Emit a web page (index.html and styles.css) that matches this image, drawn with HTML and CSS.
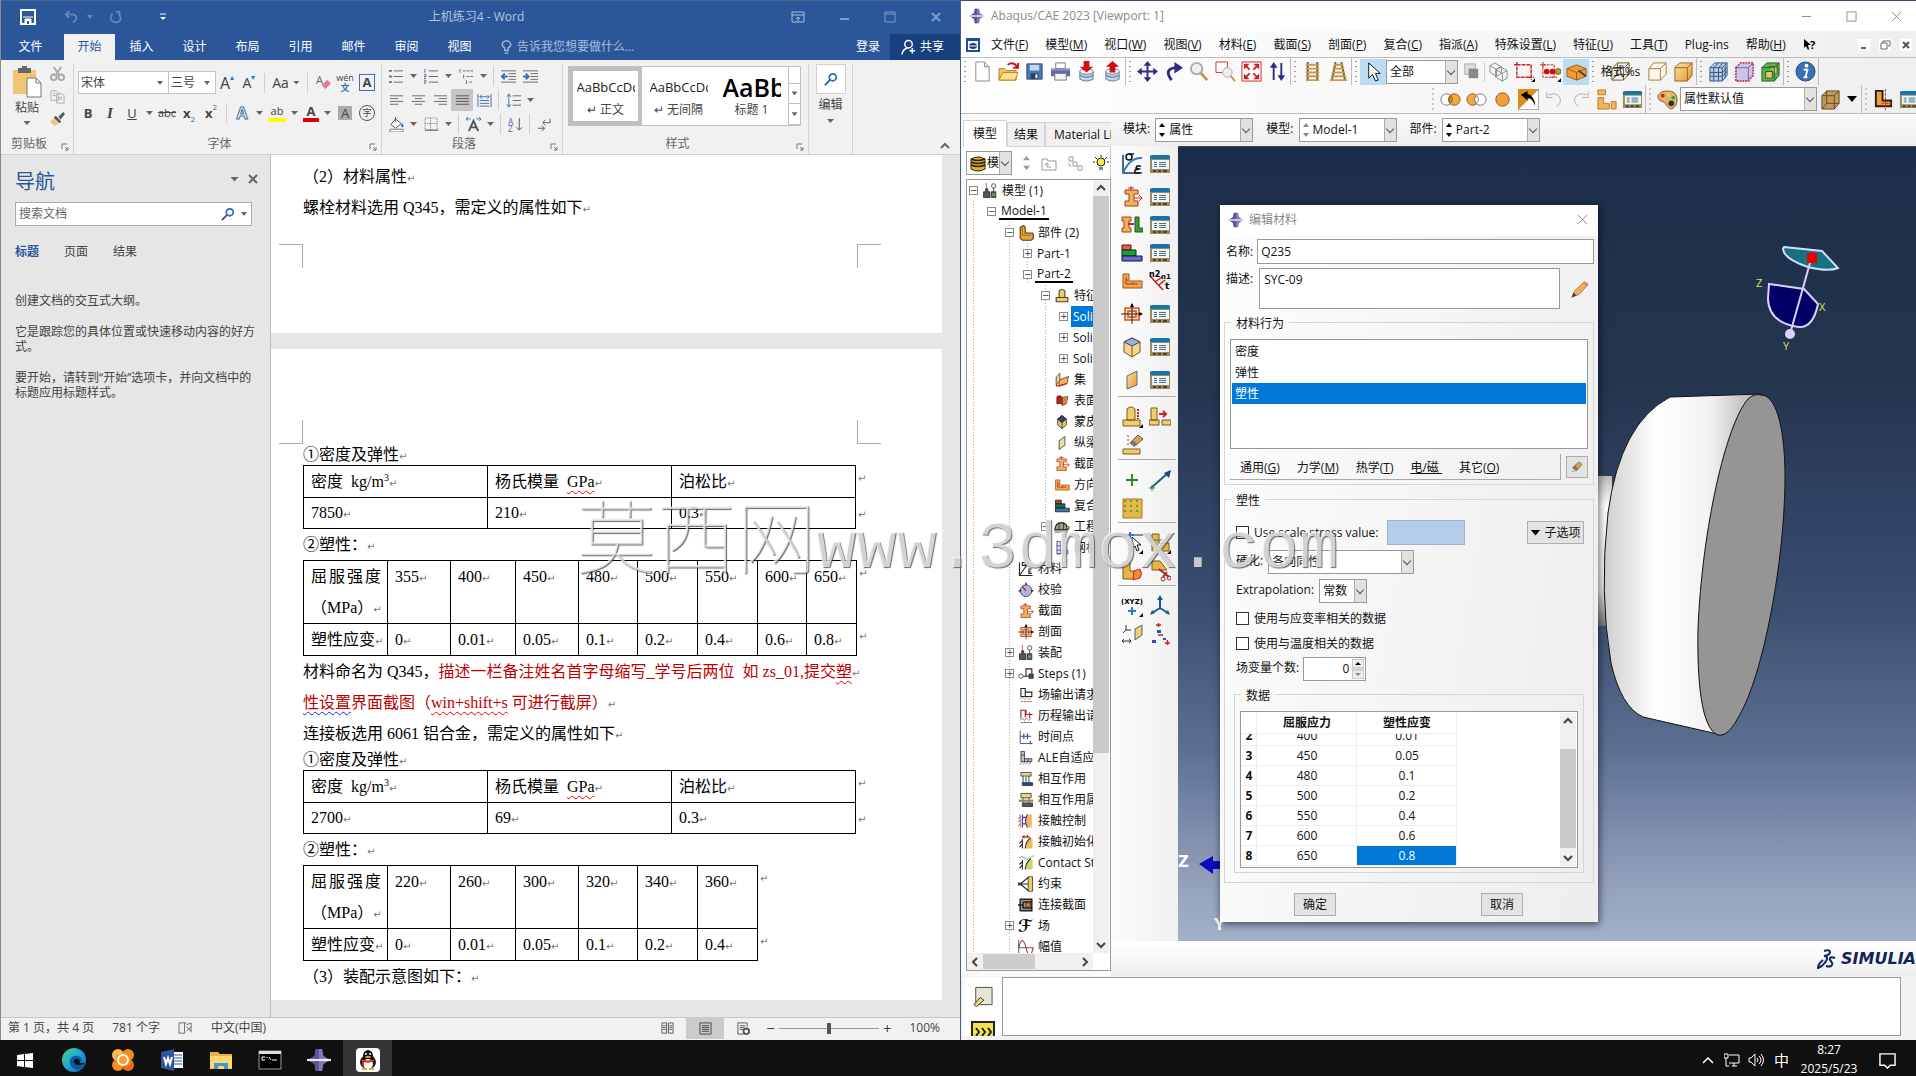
FILE: index.html
```html
<!DOCTYPE html>
<html lang="zh-CN">
<head>
<meta charset="utf-8">
<title>上机练习4 - Word</title>
<link rel="stylesheet" href="styles.css">
</head>
<body>
<svg class="defs" aria-hidden="true">
  <defs>
    <linearGradient id="gold" x1="0" y1="0" x2="1" y2="1"><stop offset="0" stop-color="#ffe3a0"/><stop offset="1" stop-color="#e09a30"/></linearGradient>
    <linearGradient id="steel" x1="0" y1="0" x2="1" y2="0"><stop offset="0" stop-color="#cfcfcf"/><stop offset=".3" stop-color="#fff"/><stop offset=".6" stop-color="#f2f2f2"/><stop offset="1" stop-color="#8a8a8a"/></linearGradient>
    <linearGradient id="edge" x1="0" y1="0" x2="1" y2="1"><stop offset="0" stop-color="#45d67a"/><stop offset=".5" stop-color="#1fa5dc"/><stop offset="1" stop-color="#0c59a4"/></linearGradient>
  </defs>
  <symbol id="abq" viewBox="0 0 22 22"><path d="M8 1h6l1 6 6 4-6 4-1 6H8l-1-6-6-4 6-4z" fill="#7d7ab5"/><path d="M8 1h3v20H8l-1-6-6-4 6-4z" fill="#5b5794"/><path d="M0 11h22" stroke="#e8e8ff" stroke-width="2"/></symbol>
  <symbol id="tbl" viewBox="0 0 22 22"><path d="M1 4q0-2 3-2h15q2 0 2 2v16H1z" fill="#9a8a5c"/><path d="M1 6V4q0-2 3-2h15q2 0 2 2v2z" fill="#1673ae"/><path d="M3 7h17v9H3z" fill="#f2f4ef"/><path d="M5 9.5h3M10 9.5h7M5 11.5h3M10 11.5h7M5 13.5h3M10 13.5h7" stroke="#46749a"/><path d="M4 17h3v2H4zM9 17h3v2H9zM14 17h4v2h-4z" fill="#4d4630"/></symbol>
  <symbol id="new" viewBox="0 0 22 22"><path d="M4 1h9l5 5v15H4z" fill="#fff" stroke="#888"/><path d="M13 1v5h5" fill="#ddd" stroke="#888"/></symbol>
  <symbol id="open" viewBox="0 0 22 22"><path d="M1 20V8h6l2 2h10v10z" fill="#f5c35c" stroke="#b58325"/><path d="M1 20l4-8h16l-3 8z" fill="#ffe08e" stroke="#b58325"/><path d="M10 4q6-4 10 2M21 2v5h-5" fill="none" stroke="#d0141c" stroke-width="2"/></symbol>
  <symbol id="save" viewBox="0 0 22 22"><path d="M3 3h16v16H3z" fill="#4a78b5" stroke="#2d4d7e"/><path d="M6 4h10v6H6z" fill="#c6d8ee"/><path d="M7 13h8v6H7z" fill="#2b3f60"/><path d="M12 14h2v4h-2z" fill="#fff"/></symbol>
  <symbol id="print" viewBox="0 0 22 22"><path d="M6 2h10v6H6z" fill="#fff" stroke="#777"/><path d="M1 8h20v8H1z" fill="#6567b5"/><path d="M1 8h20v2H1z" fill="#8f91d2"/><path d="M5 13h12v7H5z" fill="#f5f5f5" stroke="#777"/></symbol>
  <symbol id="dbd" viewBox="0 0 22 22"><path d="M4 11v8q7 4 14 0v-8z" fill="#c5d3e4" stroke="#6c7f98"/><ellipse cx="11" cy="11" rx="7" ry="3" fill="#eef3f8" stroke="#6c7f98"/><path d="M4 15q7 4 14 0" fill="none" stroke="#3c6fa5"/><path d="M8 0h6v6h4l-7 6-7-6h4z" fill="#d40d12"/></symbol>
  <symbol id="dbu" viewBox="0 0 22 22"><path d="M4 11v8q7 4 14 0v-8z" fill="#c5d3e4" stroke="#6c7f98"/><ellipse cx="11" cy="11" rx="7" ry="3" fill="#eef3f8" stroke="#6c7f98"/><path d="M4 15q7 4 14 0" fill="none" stroke="#3c6fa5"/><path d="M8 12h6V6h4l-7-6-7 6h4z" fill="#d40d12"/></symbol>
  <symbol id="move" viewBox="0 0 22 22"><path d="M11 3v16M3 11h16" stroke="#2c2c86" stroke-width="2"/><path d="M11 0l4 5H7zM11 22l4-5H7zM0 11l5-4v8zM22 11l-5-4v8z" fill="#2c2c86"/></symbol>
  <symbol id="rot" viewBox="0 0 22 22"><path d="M9 20Q0 8 14 7" fill="none" stroke="#2c2c86" stroke-width="3"/><path d="M12 1l9 6-9 6z" fill="#2c2c86"/></symbol>
  <symbol id="zoom" viewBox="0 0 22 22"><path d="M12 12l7 8" stroke="#c79644" stroke-width="3"/><circle cx="8" cy="8" r="6" fill="#eee" stroke="#aaa" stroke-width="2"/></symbol>
  <symbol id="zbox" viewBox="0 0 22 22"><path d="M1 1h12v11H1z" fill="none" stroke="#c33"/><path d="M16 15l5 6" stroke="#c79644" stroke-width="2"/><circle cx="13" cy="12" r="5" fill="#eee" stroke="#aaa"/></symbol>
  <symbol id="fit" viewBox="0 0 22 22"><path d="M1 1h20v20H1z" fill="#fff" stroke="#c22"/><path d="M3 3h6L3 9zM19 3h-6l6 6zM3 19h6l-6-6zM19 19h-6l6-6z" fill="#c22"/><path d="M4 4l5 5M18 4l-5 5M4 18l5-5M18 18l-5-5" stroke="#c22" stroke-width="2"/></symbol>
  <symbol id="ud" viewBox="0 0 22 22"><path d="M7 5v15M15 2v15" stroke="#2c2c86" stroke-width="2"/><path d="M7 1l4 6H3zM15 21l4-6h-8z" fill="#2c2c86"/></symbol>
  <symbol id="lad" viewBox="0 0 22 22"><path d="M6 1v20M16 1v20" stroke="#6b5a30" stroke-width="2"/><path d="M4 4h14M4 8h14M4 12h14M4 16h14M4 20h14" stroke="#c59a4a" stroke-width="2"/></symbol>
  <symbol id="lad2" viewBox="0 0 22 22"><path d="M8 1L4 21M14 1l4 20" stroke="#6b5a30" stroke-width="2"/><path d="M6 4h10M5 8h12M4 12h14M3 16h16M2 20h18" stroke="#c59a4a" stroke-width="2"/></symbol>
  <symbol id="cur" viewBox="0 0 22 22"><path d="M6 2v16l4-4 3 7 3-1-3-7h5z" fill="#fff" stroke="#111"/></symbol>
  <symbol id="pick" viewBox="0 0 22 22"><path d="M0 3h22" stroke="#222"/><path d="M9 0v7M5 3h8" stroke="#2779d8" stroke-width="2"/><path d="M11 5v12l3-3 2 5 2-1-2-5h4z" fill="#fff" stroke="#111"/><path d="M22 22h-4l4-4z"/></symbol>
  <symbol id="sqs" viewBox="0 0 22 22"><path d="M4 3h11v11H4z" fill="#ddd" stroke="#aaa"/><path d="M8 8h10v10H8z" fill="#888"/></symbol>
  <symbol id="cubes" viewBox="0 0 22 22"><path d="M2 5l5-3 7 4v7l-5 3-7-4zM2 5l7 4v7M9 9l5-3M8 9l5-3 7 4v8l-5 3-7-4zM8 9l7 4v8M15 13l5-3" fill="none" stroke="#888"/></symbol>
  <symbol id="rect" viewBox="0 0 22 22"><path d="M3 4h15v13H3zM0 4h6M3 1v6M15 17h6M18 14v6" fill="none" stroke="#c22" stroke-width="1.5" stroke-dasharray="4 1"/><path d="M22 22h-4l4-4z"/></symbol>
  <symbol id="dots" viewBox="0 0 22 22"><path d="M3 4h12v13H3zM0 4h6M3 1v6M12 17h6" fill="none" stroke="#c22" stroke-dasharray="3 1"/><circle cx="7" cy="11" r="3" fill="#c11"/><circle cx="13" cy="11" r="3" fill="#c11"/><circle cx="19" cy="11" r="3" fill="#d9912e" stroke="#74501a"/><path d="M22 22h-4l4-4z"/></symbol>
  <symbol id="obox" viewBox="0 0 22 22"><path d="M1 8l10-4 10 4v8l-10 4-10-4z" fill="#f29b33" stroke="#9a5a12"/><path d="M1 8l10 4 10-4M11 12v8" fill="none" stroke="#9a5a12"/><path d="M13 10l8 6" stroke="#445" stroke-width="2"/></symbol>
  <symbol id="wire" viewBox="0 0 22 22"><path d="M2 8h12v12H2zM8 2h12v12H8zM2 8l6-6M14 8l6-6M2 20l6-6M14 20l6-6" fill="none" stroke="#6a5620"/></symbol>
  <symbol id="hid" viewBox="0 0 22 22"><path d="M2 8l5-6h13v12l-6 6H2zM2 8h12v12M14 8l6-6" fill="#fdf8ec" stroke="#a08030"/></symbol>
  <symbol id="sol" viewBox="0 0 22 22"><path d="M2 7l5-5h13v13l-5 6H2z" fill="url(#gold)" stroke="#94651c"/><path d="M2 7h13v14M15 7l5-5" fill="none" stroke="#94651c"/></symbol>
  <symbol id="mesh" viewBox="0 0 22 22"><path d="M2 7l5-5h13v13l-5 6H2z" fill="#b8cde8" stroke="#35507f"/><path d="M2 7h13v14M15 7l5-5M2 12h13l5-5M2 16h13l5-5M6 7v14M11 7v14M6 7l5-5M11 7l5-5M18 5v13" fill="none" stroke="#35507f"/></symbol>
  <symbol id="pmesh" viewBox="0 0 22 22"><path d="M2 7l5-5h13v13l-5 6H2z" fill="#ccc4e8" stroke="#b8427a" stroke-dasharray="2 1" stroke-width="2"/><path d="M2 7h13v14M15 7l5-5" fill="none" stroke="#6f5fa5"/></symbol>
  <symbol id="gcube" viewBox="0 0 22 22"><path d="M2 7l5-5h13v13l-5 6H2z" fill="#5faf4c" stroke="#1f5f22"/><path d="M6 11h7v7H6zM9 6h9v8" fill="#e5c170" stroke="#1f5f22"/><path d="M2 7h13v14M15 7l5-5" fill="none" stroke="#1f5f22"/></symbol>
  <symbol id="info" viewBox="0 0 22 22"><circle cx="11" cy="11" r="10" fill="#3a6fb5" stroke="#234b80"/><circle cx="12" cy="5" r="2" fill="#fff"/><path d="M9 9h4l-2 8h2M9 17h4" fill="none" stroke="#fff" stroke-width="2"/></symbol>
  <symbol id="v1" viewBox="0 0 22 22"><circle cx="7" cy="11" r="6" fill="#fff" stroke="#777"/><circle cx="15" cy="11" r="6" fill="#f2a844" stroke="#8a5a1c"/><path d="M11 7q-4 4 0 8 4-4 0-8" fill="#d8861c" stroke="#8a5a1c"/></symbol>
  <symbol id="v2" viewBox="0 0 22 22"><circle cx="7" cy="11" r="6" fill="#f2a844" stroke="#8a5a1c"/><circle cx="15" cy="11" r="6" fill="#fff" stroke="#777"/><path d="M11 7q-4 4 0 8 4-4 0-8" fill="#fff" stroke="#777"/></symbol>
  <symbol id="v3" viewBox="0 0 22 22"><circle cx="11" cy="11" r="7" fill="#f2a13a" stroke="#8a5a1c"/></symbol>
  <symbol id="bent" viewBox="0 0 22 22"><path d="M0 0h22v22H0z" fill="#fff" stroke="#555"/><path d="M0 0h22L0 22z" fill="#e08a1c"/><path d="M3 6l7-4v3q8 3 8 13-3-8-8-9v3z"/></symbol>
  <symbol id="undo" viewBox="0 0 22 22"><path d="M5 6q9-3 12 4 1 6-4 8" fill="none" stroke="#aaa"/><path d="M3 3v6h6" fill="none" stroke="#aaa"/></symbol>
  <symbol id="redo" viewBox="0 0 22 22"><path d="M17 6Q8 3 5 10q-1 6 4 8" fill="none" stroke="#aaa"/><path d="M19 3v6h-6" fill="none" stroke="#aaa"/></symbol>
  <symbol id="blk" viewBox="0 0 22 22"><path d="M2 1h8v5H2zM2 9h6v6h6v6H2zM16 13h5v8h-5z" fill="#f0b458" stroke="#b9802c"/></symbol>
  <symbol id="pal" viewBox="0 0 22 22"><path d="M11 2q10 0 10 9 0 9-7 10-4-3-6-7Q0 12 1 7q3-5 10-5z" fill="#e4b26a" stroke="#845a20"/><circle cx="6" cy="7" r="2" fill="#c22"/><circle cx="12" cy="6" r="2" fill="#e8d23a"/><circle cx="17" cy="9" r="2" fill="#2a5"/><circle cx="15" cy="15" r="3" fill="#333"/></symbol>
  <symbol id="tan" viewBox="0 0 22 22"><path d="M2 7l5-5h13v13l-5 6H2z" fill="#c39a5c" stroke="#5f4720"/><path d="M2 7h13v14M15 7l5-5M7 2v13h13M7 15l-5 6" fill="none" stroke="#5f4720"/></symbol>
  <symbol id="lred" viewBox="0 0 22 22"><path d="M3 2h7v10h9v6H3z" fill="#f0a030" stroke="#222" stroke-width="2"/><path d="M13 0v22M9 15h12" stroke="#c22" stroke-dasharray="3 1"/></symbol>
  <symbol id="se" viewBox="0 0 22 22"><path d="M2 2v18h19" fill="none" stroke="#235" stroke-width="1.5"/><path d="M2 20Q9 4 21 5" fill="none" stroke="#2b7cc0" stroke-width="2"/><circle cx="8" cy="4" r="3" fill="none" stroke="#111" stroke-width="1.5"/><path d="M8 1h5M20 13h-4l-1 2 3 1-4 1v3h5" fill="none" stroke="#111" stroke-width="1.5"/></symbol>
  <symbol id="ibeam" viewBox="0 0 22 22"><path d="M4 4h13v4h-4v7h4v5H4v-5h4V8H4z" fill="#f0b060" stroke="#a33d16"/><path d="M10 0v4M7 2h6M13 12h8M18 9l3 3-3 3" fill="none" stroke="#c22"/></symbol>
  <symbol id="il" viewBox="0 0 22 22"><path d="M1 3h9v4H8v7h2v4H1v-4h2V7H1z" fill="#f0b060" stroke="#a33d16"/><path d="M7 10h6" stroke="#c22" stroke-width="2"/><path d="M14 3h4v11h4v4h-8z" fill="#3d9a3c" stroke="#1c5a20"/></symbol>
  <symbol id="stack" viewBox="0 0 22 22"><path d="M1 3h9v5H1z" fill="#e8604c" stroke="#511"/><path d="M1 8h14v6H1z" fill="#18a42c" stroke="#031"/><path d="M1 14h20v5H1z" fill="#6a68c8" stroke="#114"/></symbol>
  <symbol id="stack2" viewBox="0 0 22 22"><path d="M2 3h8v5H2z" fill="#b5482c" stroke="#111"/><path d="M2 8h13v6H2z" fill="#23685a" stroke="#111"/><path d="M2 14h19v5H2z" fill="#3a7aa0" stroke="#111"/></symbol>
  <symbol id="ell" viewBox="0 0 22 22"><path d="M2 4h6v7h13v7H2z" fill="#f0a850" stroke="#9a5515"/><path d="M5 7v7h12M5 10h2M12 12v2" fill="none" stroke="#c22"/></symbol>
  <symbol id="nt" viewBox="0 0 22 22"><path d="M1 6l13 14M6 12l7-5M10 15l6-5" stroke="#b22" stroke-width="1.5"/><text x="0" y="7" font-size="8" font-weight="bold" font-family="DejaVu Sans">n2</text><text x="12" y="9" font-size="7" font-weight="bold" font-family="DejaVu Sans">n1</text><text x="16" y="19" font-size="9" font-weight="bold" font-family="DejaVu Sans">t</text></symbol>
  <symbol id="cross" viewBox="0 0 22 22"><path d="M4 5h14v12H4zM7 8h8v6H7z" fill="#fbe0c0" stroke="#d2551c" stroke-width="1.5"/><path d="M11 1v20M0 11h21" stroke="#222"/><path d="M11 0l2 4H9zM22 11l-4-2v4z"/></symbol>
  <symbol id="cube3" viewBox="0 0 22 22"><path d="M3 6l8-4 8 4v10l-8 5-8-5z" fill="#f6d694" stroke="#7a5520"/><path d="M3 6l8-4 8 4-8 4z" fill="#9ab2de" stroke="#445"/><path d="M11 10v11" stroke="#7a5520"/></symbol>
  <symbol id="plate" viewBox="0 0 22 22"><path d="M6 7l10-5v14L6 20z" fill="url(#gold)" stroke="#5a6a80"/></symbol>
  <symbol id="ext" viewBox="0 0 22 22"><path d="M2 14h17v6H2zM6 3q4-4 8 0v11H6z" fill="#f0cc70" stroke="#7a5a1c"/><path d="M17 3v10" stroke="#c22" stroke-dasharray="2 1" stroke-width="2"/><path d="M22 22h-4l4-4z"/></symbol>
  <symbol id="ext2" viewBox="0 0 22 22"><path d="M2 2h6v12H2zM0 14h10v5H0zM13 14h9v5h-9z" fill="#f0cc70" stroke="#7a5a1c"/><path d="M10 8h6M14 5l3 3-3 3" fill="none" stroke="#c22" stroke-width="2"/></symbol>
  <symbol id="ers" viewBox="0 0 22 22"><path d="M2 15h17v5H2z" fill="#f0cc70" stroke="#7a5a1c"/><path d="M7 1v12" stroke="#c22" stroke-dasharray="2 2"/><path d="M9 9l8-8 5 4-8 7z" fill="#e0a050" stroke="#555"/><path d="M9 9l3-3 4 4-3 3z" fill="#777"/></symbol>
  <symbol id="plus" viewBox="0 0 22 22"><path d="M11 5v12M5 11h12" stroke="#2a8a30" stroke-width="2"/></symbol>
  <symbol id="axis" viewBox="0 0 22 22"><path d="M2 19L20 3" stroke="#126a7a" stroke-width="2"/><path d="M22 1l-2 8-5-5z" fill="#124a8a"/><path d="M3 16v6M0 19h6" stroke="#2a8a30"/></symbol>
  <symbol id="grid" viewBox="0 0 22 22"><path d="M2 2h19v19H2z" fill="#e6b84c" stroke="#a87a20"/><path d="M3 4h17M3 9h17M3 14h17" stroke="#5f9f2c" stroke-width="2" stroke-dasharray="2 4"/></symbol>
  <symbol id="part" viewBox="0 0 22 22"><path d="M3 2h7v9h10v8H3z" fill="#e9b548" stroke="#7a5a1c"/><path d="M0 8h14" stroke="#2779b8"/><path d="M22 22h-4l4-4z"/></symbol>
  <symbol id="part2" viewBox="0 0 22 22"><path d="M2 2h7v9h4v8H2z" fill="#e9b548" stroke="#7a5a1c"/><path d="M13 11l6-2q3 4 0 9l-7 2z" fill="#f08a40" stroke="#c22"/></symbol>
  <symbol id="cut" viewBox="0 0 22 22"><path d="M3 1h8l7 9H3z" fill="#e9b548" stroke="#7a5a1c"/><path d="M10 9l10 8M14 17l4-5" stroke="#9a2a2a" stroke-width="2"/><circle cx="20" cy="18" r="2" fill="none" stroke="#9a2a2a"/><circle cx="14" cy="19" r="2" fill="none" stroke="#9a2a2a"/></symbol>
  <symbol id="xyz" viewBox="0 0 22 22"><text x="0" y="9" font-size="7" font-weight="bold" font-family="DejaVu Sans">(XYZ)</text><path d="M11 12v8M7 16h8" stroke="#2779d8" stroke-width="2"/><path d="M22 22h-4l4-4z"/></symbol>
  <symbol id="tri" viewBox="0 0 22 22"><path d="M11 2v11L3 18M11 13l8 5" fill="none" stroke="#155a9a" stroke-width="2"/><path d="M11 0l3 5H8zM1 20l2-5 3 3zM21 20l-2-5-3 3z" fill="#155a9a"/></symbol>
  <symbol id="trip" viewBox="0 0 22 22"><path d="M5 2v5h5M5 7L2 10M1 18h9M3 16l-2 2 2 2M8 16l2 2-2 2" fill="none" stroke="#333"/><path d="M14 6l7-4v10l-7 5z" fill="#f1cf78" stroke="#467"/></symbol>
  <symbol id="pts" viewBox="0 0 22 22"><path d="M7 2h5M9.500 0v4M16 20h5M18.500 17v5M9 12h5" stroke="#c22" stroke-width="1.500"/><path d="M8 7h4v3H8zM3 17h4v3H3zM14 15h3v2h-3z" fill="#25b"/></symbol>
  <symbol id="asm" viewBox="0 0 22 22"><path d="M2 20V12h3V8h3v4h3v8zM13 20v-8h6v8z" fill="#555" stroke="#222"/><path d="M6 0v8" stroke="#c22"/><circle cx="16" cy="4" r="3" fill="none" stroke="#222"/><path d="M16 7v6" stroke="#222"/><path d="M14 14h4v4h-4z" fill="#5a5"/></symbol>
  <symbol id="eng" viewBox="0 0 22 22"><path d="M1 15q1-10 9-10t9 10z" fill="#8fa58f" stroke="#222" stroke-width="1.500"/><path d="M7 5v10M13 5v10M1 18h18" stroke="#222"/><circle cx="19" cy="12" r="2" fill="#e0c040" stroke="#222"/></symbol>
  <symbol id="lpt" viewBox="0 0 22 22"><path d="M3 3l5-2 2 2v8h10l1 2v6l-3 2H6l-3-3z" fill="#e3a83c" stroke="#5a3a08" stroke-width="1.5"/><path d="M6 4v10h12" fill="none" stroke="#8a5a14"/></symbol>
  <symbol id="feat" viewBox="0 0 22 22"><path d="M3 13h16v6H3zM7 4q4-4 8 0v9H7z" fill="#e8cc78" stroke="#54420f" stroke-width="1.5"/></symbol>
  <symbol id="set" viewBox="0 0 22 22"><path d="M7 11l13-5-2 10-11 3z" fill="#f2b060" stroke="#6a2a0a"/><path d="M3 18V7l5-5v10z" fill="#f4d98a" stroke="#222"/><path d="M3 19h5l9-3" stroke="#c22" fill="none" stroke-width="2"/></symbol>
  <symbol id="srf" viewBox="0 0 22 22"><path d="M4 5q5-3 7 1l8-1-2 10-6 2-1-3-6 1z" fill="#b82218" stroke="#511"/><path d="M12 6l7-1-2 10-5 1z" fill="#b89050"/></symbol>
  <symbol id="skin" viewBox="0 0 22 22"><path d="M5 7l6-5 6 5v8l-6 5-6-5z" fill="#e6c860" stroke="#222"/><path d="M5 7l6-5 6 5-6 5z" fill="#334070" stroke="#222"/><path d="M11 12v8" stroke="#222"/></symbol>
  <symbol id="str" viewBox="0 0 22 22"><path d="M7 8l8-6v12l-8 6z" fill="#ecdca0" stroke="#222"/></symbol>
  <symbol id="mat" viewBox="0 0 22 22"><path d="M2 2v18h18M2 20L14 3" fill="none" stroke="#223" stroke-width="1.5"/><path d="M6 2h4v4H6zM19 11h-4v6h4M15 14h3" fill="none" stroke="#223" stroke-width="1.5"/></symbol>
  <symbol id="cal" viewBox="0 0 22 22"><circle cx="11" cy="12" r="8" fill="#b4b4e0" stroke="#223"/><path d="M11 12L6 6" stroke="#c22" stroke-width="2"/><path d="M11 1v3M1 12h3M18 12h3" stroke="#223" stroke-width="2"/></symbol>
  <symbol id="step" viewBox="0 0 22 22"><circle cx="4" cy="14" r="3" fill="none" stroke="#222"/><path d="M7 14h4V4h8v7M11 14h4" fill="none" stroke="#222" stroke-width="1.5"/><path d="M15 11h6v6h-6z" fill="#454" stroke="#222"/></symbol>
  <symbol id="out" viewBox="0 0 22 22"><path d="M4 2h6v5h9v6H4zM10 7v6" fill="none" stroke="#222" stroke-width="1.5"/><path d="M3 17l3-3 3 3 3-3 3 3 3-3M4 20h15" fill="none" stroke="#a22" stroke-dasharray="3 1"/></symbol>
  <symbol id="out2" viewBox="0 0 22 22"><path d="M4 2v12M4 3h7v6h9M10 3v10M16 6v8" fill="none" stroke="#a22" stroke-width="1.500"/><path d="M3 17l3-3 3 3 3-3 3 3 3-3M4 20h15" fill="none" stroke="#222" stroke-dasharray="3 1"/></symbol>
  <symbol id="time" viewBox="0 0 22 22"><path d="M3 2v18h17" stroke="#222" fill="none"/><path d="M3 10h15M8 6v8M13 6v8M17 16v5" stroke="#34a" stroke-width="1.5"/></symbol>
  <symbol id="ale" viewBox="0 0 22 22"><path d="M4 2h5v10h10v4H4zM4 7h5M9 12v4M14 12v4" fill="#bbc" stroke="#223"/><path d="M3 20l3-4M7 20l3-4M11 20l3-4M15 20l3-4" stroke="#a22"/></symbol>
  <symbol id="msh" viewBox="0 0 22 22"><path d="M4 2h5v17H4zM4 8h5M4 14h15v5H4M14 14v5" fill="#dde" stroke="#237"/></symbol>
  <symbol id="int" viewBox="0 0 22 22"><path d="M4 2h14v5H4z" fill="#ecd878" stroke="#222"/><path d="M6 16h14v4H6z" fill="#244a78" stroke="#222"/><path d="M7 7v9M15 7v9M11 8v7" stroke="#176a70" stroke-width="1.5"/></symbol>
  <symbol id="intp" viewBox="0 0 22 22"><path d="M4 2h14v6H4z" fill="#ecd878" stroke="#222"/><path d="M6 15h14v5H6z" fill="#556" stroke="#222"/><path d="M7 8v7M15 8v7" stroke="#222"/><path d="M1 12h20" stroke="#998860" stroke-width="3"/></symbol>
  <symbol id="con" viewBox="0 0 22 22"><path d="M13 2h6v18h-6q-6-9 0-18z" fill="#f5ba55"/><path d="M3 2v18M3 5L0 8M3 10l-3 3M3 15l-3 3" fill="none" stroke="#a22"/><path d="M6 2v18M13 2q-5 9 0 18M6 6h5M6 15h5" fill="none" stroke="#33a" stroke-width="1.500"/></symbol>
  <symbol id="coni" viewBox="0 0 22 22"><path d="M14 7h6v13h-9z" fill="#f5ba55"/><path d="M6 7v13M6 9l-4 4M6 14l-4 4M18 5q-7 4-8 15" fill="none" stroke="#222" stroke-width="1.500"/><path d="M6 4h10M13 1v5M9 2L6 4l3 2" fill="none" stroke="#c22" stroke-width="1.500"/></symbol>
  <symbol id="cons" viewBox="0 0 22 22"><path d="M14 7h6v13h-9z" fill="#c5dc60"/><path d="M6 7v13M6 9l-4 4M6 14l-4 4M18 5q-7 4-8 15" fill="none" stroke="#222" stroke-width="1.500"/><path d="M1 4q4-4 8 0t8 0 5-2" fill="none" stroke="#2a8a9a"/></symbol>
  <symbol id="cst" viewBox="0 0 22 22"><path d="M14 1h6v20h-6z" fill="#f2d058" stroke="#222"/><path d="M14 2L3 11l11 9M4 11h10" fill="none" stroke="#222" stroke-width="1.5"/><path d="M0 9h4v4H0z" fill="#353"/></symbol>
  <symbol id="cns" viewBox="0 0 22 22"><path d="M3 3h16v16H3z" fill="#999" stroke="#222" stroke-width="2"/><path d="M7 7h12M7 7v8h12M0 11h7" stroke="#222" stroke-width="2" fill="none"/><path d="M11 8h6v6h-6z" fill="#e07a3c" stroke="#511"/></symbol>
  <symbol id="amp" viewBox="0 0 22 22"><path d="M1 1v20M1 12h20" stroke="#222"/><path d="M1 12Q6-8 11 12T21 12" fill="none" stroke="#b02a3a" stroke-width="1.5"/></symbol>
  <symbol id="pencil" viewBox="0 0 22 22"><path d="M2 20l3-7L16 3l4 3-10 11z" fill="#f2ae60" stroke="#b87830"/><path d="M2 20l2-5 3 3z" fill="#333"/><path d="M16 3l4 3-2 2-4-4z" fill="#c98b76"/></symbol>
  <symbol id="eraser" viewBox="0 0 22 22"><path d="M4 12l10-9 5 4-9 10z" fill="#d9a050" stroke="#6a4a20"/><path d="M4 12l4-4 5 6-3 3z" fill="#777"/><path d="M3 18l5-1" stroke="#c66"/></symbol>
  <symbol id="lines" viewBox="0 0 16 16"><path d="M1 3h14M1 6h9M1 9h14M1 12h9" stroke="#666"/></symbol>
  <symbol id="linesc" viewBox="0 0 16 16"><path d="M1 3h14M4 6h8M1 9h14M4 12h8" stroke="#666"/></symbol>
  <symbol id="linesr" viewBox="0 0 16 16"><path d="M1 3h14M6 6h9M1 9h14M6 12h9" stroke="#666"/></symbol>
  <symbol id="linesj" viewBox="0 0 16 16"><path d="M1 3h14M1 6h14M1 9h14M1 12h14" stroke="#555"/></symbol>
  <symbol id="bul" viewBox="0 0 16 16"><path d="M5 2h10M5 8h10M5 14h10" stroke="#666"/><path d="M0 1h3v2H0zM0 7h3v2H0zM0 13h3v2H0z" fill="#41719c"/></symbol>
  <symbol id="num" viewBox="0 0 16 16"><path d="M5 2h10M5 8h10M5 14h10" stroke="#666"/><path d="M1 0v4M0 6h2v2H0v2h2M0 12h2v2H0v2h2" fill="none" stroke="#41719c"/></symbol>
  <symbol id="mlv" viewBox="0 0 16 16"><path d="M4 2h11M8 8h7M11 14h4" stroke="#666" stroke-dasharray="3 1"/><path d="M1 0v4M5 6v4M8 12v4" stroke="#41719c"/></symbol>
  <symbol id="outd" viewBox="0 0 16 16"><path d="M0 2h16M8 5h8M8 8h8M8 11h8M0 14h16" stroke="#666"/><path d="M7 8H1M4 5L1 8l3 3" fill="none" stroke="#2e75b6" stroke-width="2"/></symbol>
  <symbol id="ind" viewBox="0 0 16 16"><path d="M0 2h16M8 5h8M8 8h8M8 11h8M0 14h16" stroke="#666"/><path d="M0 8h6M3 5l3 3-3 3" fill="none" stroke="#2e75b6" stroke-width="2"/></symbol>
  <symbol id="spc" viewBox="0 0 16 16"><path d="M7 3h9M7 8h9M7 13h9" stroke="#666"/><path d="M3 1v14M1 4l2-3 2 3M1 12l2 3 2-3" fill="none" stroke="#2e75b6"/></symbol>
  <symbol id="dist" viewBox="0 0 16 16"><path d="M1 1v14M15 1v14M3 8h10M3 11h10M3 14h10" stroke="#41719c"/><path d="M3 4h10M5 2L3 4l2 2M11 2l2 2-2 2" fill="none" stroke="#2e75b6"/></symbol>
  <symbol id="bucket" viewBox="0 0 16 16"><path d="M2 8l5-6 6 5-6 5zM7 0v5" fill="#fff" stroke="#555"/><path d="M14 6q3 5 0 5-2-1 0-5" fill="#2e75b6"/><path d="M1 13h14v3H1z" fill="#fff" stroke="#777"/></symbol>
  <symbol id="bord" viewBox="0 0 16 16"><path d="M1 1h13v13H1zM7 1v13M1 7h13" fill="none" stroke="#777" stroke-dasharray="1 1"/><path d="M1 14h14" stroke="#555"/></symbol>
  <symbol id="ascl" viewBox="0 0 16 16"><path d="M3 15l5-11 5 11M5 11h6" fill="none" stroke="#555" stroke-width="2"/><path d="M5 2H0M2 0L0 2l2 2M11 2h5M14 0l2 2-2 2" fill="none" stroke="#2e75b6"/></symbol>
  <symbol id="sort" viewBox="0 0 16 16"><text x="0" y="8" font-size="9" fill="#2e75b6" font-family="Open Sans">A</text><text x="0" y="16" font-size="9" fill="#8a3ab0" font-family="Open Sans">Z</text><path d="M12 1v13M9 11l3 3 3-3" fill="none" stroke="#555"/></symbol>
  <symbol id="mag" viewBox="0 0 16 16"><circle cx="10" cy="6" r="4" fill="none" stroke="#2b6cb0" stroke-width="2"/><path d="M7 9l-6 6" stroke="#2b579a" stroke-width="2"/></symbol>
  <symbol id="mk" viewBox="0 0 16 16"><path d="M14 2v4H7M9 3L6 6l3 3M1 12h7M5 9l3 3-3 3" fill="none" stroke="#555"/></symbol>
  <symbol id="lau" viewBox="0 0 8 8"><path d="M1 6V1h5M4 4l3 3M7 4v3H4" fill="none" stroke="#777"/></symbol>
</svg>

<main class="stage">
<section class="word" aria-label="Word">
  <header class="w-title">
    <div class="quick">
      <button aria-label="保存"><svg viewBox="0 0 16 16"><path d="M1 1h14v14H1z" fill="none" stroke="#fff" stroke-width="2"/><path d="M3 8h10M5 10h6v5H5z" stroke="#fff" fill="#fff"/><path d="M7 12h2v3H7z" fill="#2b579a"/></svg></button>
      <button aria-label="撤消" class="dim"><svg viewBox="0 0 16 16"><path d="M3 5h6q5 0 5 4 0 3-4 5M6 1L2 5l4 4" fill="none" stroke="#6486be" stroke-width="2"/></svg><span class="ca"></span></button>
      <button aria-label="恢复" class="dim"><svg viewBox="0 0 16 16"><path d="M4 4q-4 5 0 9 6 3 9-2 1-4-2-7M8 2h4v5" fill="none" stroke="#6486be" stroke-width="2"/></svg></button>
      <button aria-label="自定义" class="custom"><svg viewBox="0 0 8 8"><path d="M1 1h6" stroke="#fff"/><path d="M1 4h6L4 7z" fill="#fff"/></svg></button>
    </div>
    <h1>上机练习4 - Word</h1>
    <div class="w-ctl">
      <button aria-label="功能区显示选项"><svg viewBox="0 0 14 14"><path d="M1 2h12v10H1zM1 5h12M7 11V7M5 9l2-2 2 2" fill="none" stroke="#a9bddd"/></svg></button>
      <button aria-label="最小化"><svg viewBox="0 0 14 14"><path d="M3 9h9" stroke="#7d9bcd" stroke-width="2"/></svg></button>
      <button aria-label="最大化"><svg viewBox="0 0 14 14"><path d="M2 2h10v10H2zM2 4h10" fill="none" stroke="#7d9bcd"/></svg></button>
      <button aria-label="关闭"><svg viewBox="0 0 14 14"><path d="M3 3l8 8M11 3l-8 8" stroke="#7d9bcd" stroke-width="2"/></svg></button>
    </div>
  </header>
  <nav class="w-tabs">
    <button class="file">文件</button><button class="on">开始</button><button>插入</button><button>设计</button><button>布局</button><button>引用</button><button>邮件</button><button>审阅</button><button>视图</button>
    <span class="tell"><svg viewBox="0 0 14 16"><path d="M5 12V9Q2 7 2 5q1-4 5-4t5 4q0 2-3 4v3zM5 15h4" fill="none" stroke="#a9bddd" stroke-width="1.5"/></svg>告诉我您想要做什么...</span>
    <button class="login">登录</button>
    <button class="share"><svg viewBox="0 0 16 16"><circle cx="8" cy="5" r="4" fill="none" stroke="#fff" stroke-width="1.5"/><path d="M1 16q1-6 6-7M12 9v6M9 12h6" fill="none" stroke="#fff" stroke-width="1.5"/></svg>共享</button>
  </nav>
  <div class="ribbon">
    <div class="grp g-clip">
      <div class="gbody clip">
        <button class="paste"><svg viewBox="0 0 30 32"><path d="M1 4h23v24H1z" fill="#f0c674"/><path d="M6 2h13v5H6zM10 0h5v3h-5z" fill="#666"/><path d="M15 12h9l5 5v14H15z" fill="#fff" stroke="#777"/><path d="M24 12v5h5" fill="none" stroke="#777"/></svg>粘贴<span class="ca"></span></button>
        <div class="col3">
          <button aria-label="剪切"><svg viewBox="0 0 16 16"><path d="M4 1l6 9M12 1L6 10" stroke="#aaa" stroke-width="2"/><circle cx="4" cy="12" r="3" fill="none" stroke="#aaa" stroke-width="2"/><circle cx="12" cy="12" r="3" fill="none" stroke="#aaa" stroke-width="2"/></svg></button>
          <button aria-label="复制"><svg viewBox="0 0 16 16"><path d="M1 2h6l2 2v8H1zM7 5h6l2 2v8H7zM9 9h4M9 11h4M3 5h3M3 7h3" fill="none" stroke="#aaa"/></svg></button>
          <button aria-label="格式刷"><svg viewBox="0 0 16 16"><path d="M9 5l5-5 2 2-5 6z" fill="#555"/><path d="M6 4l6 6-2 2-6-6z" fill="#555"/><path d="M4 7l5 5-4 3-5-5z" fill="#f0c674"/></svg></button>
        </div>
      </div>
      <div class="glabel">剪贴板<svg><use href="#lau"/></svg></div>
    </div>
    <div class="grp g-font">
      <div class="gbody">
        <div class="r r1">
          <label class="wc f1"><select aria-label="字体"><option>宋体</option></select></label><label class="wc f2"><select aria-label="字号"><option>三号</option></select></label>
          <button class="b22 big">A<sup>▴</sup></button><button class="b22 mid">A<sup>▾</sup></button><i class="vs"></i><button class="b34 mid">Aa<span class="ca"></span></button><i class="vs"></i>
          <button class="b22" aria-label="清除格式"><svg viewBox="0 0 16 16"><text x="0" y="10" font-size="12" fill="#666" font-family="Open Sans">A</text><path d="M6 11l6-6 4 4-6 6z" fill="#e8798e"/></svg></button>
          <button class="b22 wen"><span>wén</span><b>文</b></button><button class="b22"><span class="abox">A</span></button>
        </div>
        <div class="r r2">
          <button class="b22"><b>B</b></button><button class="b22"><i class="it">I</i></button><button class="b22"><u>U</u></button><span class="ca"></span><button class="b22"><s>abc</s></button><button class="b22 low"><b>x</b><sub>2</sub></button><button class="b22 high"><b>x</b><sup>2</sup></button><i class="vs"></i>
          <button class="b22 fx">A</button><span class="ca"></span><button class="b22 hl">ab</button><span class="ca"></span><button class="b22 fc">A</button><span class="ca"></span><button class="b22"><span class="shade">A</span></button><button class="b22"><span class="circ">字</span></button>
        </div>
      </div>
      <div class="glabel">字体<svg><use href="#lau"/></svg></div>
    </div>
    <div class="grp g-para">
      <div class="gbody">
        <div class="r p1"><button class="b22"><svg><use href="#bul"/></svg></button><span class="ca"></span><button class="b22"><svg><use href="#num"/></svg></button><span class="ca"></span><button class="b22"><svg><use href="#mlv"/></svg></button><span class="ca"></span><i class="vs"></i><button class="b22"><svg><use href="#outd"/></svg></button><button class="b22"><svg><use href="#ind"/></svg></button></div>
        <div class="r p1"><button class="b22"><svg><use href="#lines"/></svg></button><button class="b22"><svg><use href="#linesc"/></svg></button><button class="b22"><svg><use href="#linesr"/></svg></button><button class="b22 sel"><svg><use href="#linesj"/></svg></button><button class="b22"><svg><use href="#dist"/></svg></button><i class="vs"></i><button class="b22"><svg><use href="#spc"/></svg></button><span class="ca"></span></div>
        <div class="r p1"><button class="b22"><svg><use href="#bucket"/></svg></button><span class="ca"></span><button class="b22"><svg><use href="#bord"/></svg></button><span class="ca"></span><i class="vs"></i><button class="b22"><svg><use href="#ascl"/></svg></button><span class="ca"></span><i class="vs"></i><button class="b22"><svg><use href="#sort"/></svg></button><i class="vs"></i><button class="b22"><svg><use href="#mk"/></svg></button></div>
      </div>
      <div class="glabel">段落<svg><use href="#lau"/></svg></div>
    </div>
    <div class="grp g-style">
      <div class="gbody">
        <div class="gallery">
          <button class="on"><span class="s">AaBbCcDd</span><em>↵ 正文</em></button><button><span class="s">AaBbCcDd</span><em>↵ 无间隔</em></button><button><span class="s h">AaBb</span><em>标题 1</em></button>
          <div class="gs"><span></span><span><i class="ca"></i></span><span><i class="ca"></i></span></div>
        </div>
      </div>
      <div class="glabel">样式<svg><use href="#lau"/></svg></div>
    </div>
    <div class="grp g-edit"><button class="edit"><span class="ebox"><svg><use href="#mag"/></svg></span>编辑<span class="ca"></span></button></div>
    <button class="fold" aria-label="折叠功能区"><svg viewBox="0 0 10 10"><path d="M1 7l4-4 4 4" fill="none" stroke="#666" stroke-width="2"/></svg></button>
  </div>
  <div class="w-body">
    <aside class="navp">
      <div class="nh"><h2>导航</h2><span class="ca"></span><button aria-label="关闭"><svg viewBox="0 0 10 10"><path d="M1 1l8 8M9 1L1 9" stroke="#666" stroke-width="2"/></svg></button></div>
      <div class="search"><input type="text" placeholder="搜索文档" aria-label="搜索文档"><svg><use href="#mag"/></svg><span class="ca"></span></div>
      <div class="nt"><button class="on">标题</button><button>页面</button><button>结果</button></div>
      <p>创建文档的交互式大纲。</p>
      <p>它是跟踪您的具体位置或快速移动内容的好方式。</p>
      <p>要开始，请转到“开始”选项卡，并向文档中的标题应用标题样式。</p>
    </aside>
    <div class="doc">
      <article class="page pg1">
        <p>（2）材料属性<i class="mk">↵</i></p>
        <p>螺栓材料选用 Q345，需定义的属性如下<i class="mk">↵</i></p>
        <div class="crop bot"><i></i><i></i></div>
      </article>
      <article class="page pg2">
        <div class="crop top"><i></i><i></i></div>
        <p class="tight">①密度及弹性<i class="mk">↵</i></p>
        <table class="t3">
          <tr><td>密度&nbsp; kg/m<sup>3</sup><i class="mk">↵</i></td><td>杨氏模量&nbsp; <span class="wavy">GPa</span><i class="mk">↵</i></td><td>泊松比<i class="mk">↵</i></td><td class="end"><i class="mk">↵</i></td></tr>
          <tr><td>7850<i class="mk">↵</i></td><td>210<i class="mk">↵</i></td><td>0.3<i class="mk">↵</i></td><td class="end"><i class="mk">↵</i></td></tr>
        </table>
        <p>②塑性：<i class="mk">↵</i></p>
        <table class="t9">
          <colgroup><col class="c84"><col class="c63"><col class="c65"><col class="c63"><col class="c59"><col class="c60"><col class="c60"><col class="c49"><col class="c50"><col></colgroup>
          <tr><td><span class="just">屈服强度</span>（MPa）<i class="mk">↵</i></td><td>355<i class="mk">↵</i></td><td>400<i class="mk">↵</i></td><td>450<i class="mk">↵</i></td><td>480<i class="mk">↵</i></td><td>500<i class="mk">↵</i></td><td>550<i class="mk">↵</i></td><td>600<i class="mk">↵</i></td><td>650<i class="mk">↵</i></td><td class="end"><i class="mk">↵</i></td></tr>
          <tr><td>塑性应变<i class="mk">↵</i></td><td>0<i class="mk">↵</i></td><td>0.01<i class="mk">↵</i></td><td>0.05<i class="mk">↵</i></td><td>0.1<i class="mk">↵</i></td><td>0.2<i class="mk">↵</i></td><td>0.4<i class="mk">↵</i></td><td>0.6<i class="mk">↵</i></td><td>0.8<i class="mk">↵</i></td><td class="end"><i class="mk">↵</i></td></tr>
        </table>
        <p>材料命名为 Q345，<span class="red">描述一栏备注姓名首字母缩写_学号后两位&nbsp; 如 zs_01,提交<span class="wavy">塑</span></span><i class="mk">↵</i><br><span class="red"><span class="wavy bl">性设置</span>界面截图（<span class="wavy">win+shift+s</span> 可进行截屏）</span><i class="mk">↵</i></p>
        <p>连接板选用 6061 铝合金，需定义的属性如下<i class="mk">↵</i></p>
        <p class="tight">①密度及弹性<i class="mk">↵</i></p>
        <table class="t3">
          <tr><td>密度&nbsp; kg/m<sup>3</sup><i class="mk">↵</i></td><td>杨氏模量&nbsp; <span class="wavy">GPa</span><i class="mk">↵</i></td><td>泊松比<i class="mk">↵</i></td><td class="end"><i class="mk">↵</i></td></tr>
          <tr><td>2700<i class="mk">↵</i></td><td>69<i class="mk">↵</i></td><td>0.3<i class="mk">↵</i></td><td class="end"><i class="mk">↵</i></td></tr>
        </table>
        <p>②塑性：<i class="mk">↵</i></p>
        <table class="t7">
          <colgroup><col class="c84"><col class="c63"><col class="c65"><col class="c63"><col class="c59"><col class="c60"><col class="c60"><col></colgroup>
          <tr><td><span class="just">屈服强度</span>（MPa）<i class="mk">↵</i></td><td>220<i class="mk">↵</i></td><td>260<i class="mk">↵</i></td><td>300<i class="mk">↵</i></td><td>320<i class="mk">↵</i></td><td>340<i class="mk">↵</i></td><td>360<i class="mk">↵</i></td><td class="end"><i class="mk">↵</i></td></tr>
          <tr><td>塑性应变<i class="mk">↵</i></td><td>0<i class="mk">↵</i></td><td>0.01<i class="mk">↵</i></td><td>0.05<i class="mk">↵</i></td><td>0.1<i class="mk">↵</i></td><td>0.2<i class="mk">↵</i></td><td>0.4<i class="mk">↵</i></td><td class="end"><i class="mk">↵</i></td></tr>
        </table>
        <p>（3）装配示意图如下：<i class="mk">↵</i></p>
      </article>
    </div>
  </div>
  <footer class="w-stat">
    <span>第 1 页，共 4 页</span><span>781 个字</span>
    <svg viewBox="0 0 16 14"><path d="M1 1h6v11H1zM7 1h2M9 3l5-2v10M9 5l5 5M14 5l-5 5" fill="none" stroke="#666"/></svg>
    <span>中文(中国)</span>
    <span class="grow"></span>
    <div class="views">
    <button class="vw" aria-label="阅读视图"><svg viewBox="0 0 14 14"><path d="M1 1h5v11H1zM8 1h5v11H8zM2 4h3M2 6h3M2 8h3M9 4h3M9 6h3M9 8h3" fill="none" stroke="#555"/></svg></button>
    <button class="vw on" aria-label="页面视图"><svg viewBox="0 0 14 14"><path d="M1 1h12v12H1zM3 4h8M3 6h8M3 8h8M3 10h8" fill="none" stroke="#444"/></svg></button>
    <button class="vw" aria-label="Web 版式视图"><svg viewBox="0 0 14 14"><path d="M11 5V1H1v12h6M3 4h6M3 6h5M3 8h4" fill="none" stroke="#555"/><circle cx="10" cy="10" r="3" fill="none" stroke="#555" stroke-width="2"/></svg></button>
    </div>
    <div class="zoomer"><span>−</span><input type="range" min="0" max="100" value="50" aria-label="缩放"><span>+</span></div><span>100%</span>
  </footer>
</section>

<section class="abq" aria-label="Abaqus/CAE">
  <header class="a-title"><svg><use href="#abq"/></svg><h1>Abaqus/CAE 2023 [Viewport: 1]</h1>
    <button aria-label="最小化"><svg viewBox="0 0 12 12"><path d="M1 6h10" stroke="#888"/></svg></button><button aria-label="最大化"><svg viewBox="0 0 12 12"><path d="M1 1h10v10H1z" fill="none" stroke="#888"/></svg></button><button aria-label="关闭"><svg viewBox="0 0 12 12"><path d="M1 1l10 10M11 1L1 11" stroke="#888"/></svg></button></header>
  <nav class="a-menu"><svg class="doci" viewBox="0 0 14 14"><path d="M1 1h12v12H1z" fill="#fff" stroke="#1e4f9c" stroke-width="2"/><path d="M1 1h12v2H1z" fill="#1e4f9c"/><ellipse cx="7" cy="8" rx="4" ry="3" fill="#223a80"/><path d="M3 8h8" stroke="#fff"/></svg>
    <button>文件(<u>F</u>)</button><button>模型(<u>M</u>)</button><button>视口(<u>W</u>)</button><button>视图(<u>V</u>)</button><button>材料(<u>E</u>)</button><button>截面(<u>S</u>)</button><button>剖面(<u>P</u>)</button><button>复合(<u>C</u>)</button><button>指派(<u>A</u>)</button><button>特殊设置(<u>L</u>)</button><button>特征(<u>U</u>)</button><button>工具(<u>T</u>)</button><button>Plug-ins</button><button>帮助(<u>H</u>)</button>
    <button class="wh" aria-label="上下文帮助"><svg viewBox="0 0 14 14"><path d="M1 1v9l2-2 2 4 1-1-1-4h3z"/><text x="7" y="11" font-size="11" font-weight="bold" font-family="Open Sans">?</text></svg></button>
    <span class="mdi"><svg viewBox="0 0 12 12"><path d="M3 9h5" stroke="#666" stroke-width="2"/></svg><svg viewBox="0 0 12 12"><path d="M4 4V2h7v5H9M2 4h6v6H2z" fill="none" stroke="#666"/></svg><svg viewBox="0 0 12 12"><path d="M3 3l6 6M9 3l-6 6" stroke="#555" stroke-width="2"/></svg></span>
  </nav>
  <div class="bar">
    <div class="tg"><button><svg><use href="#new"/></svg></button><button><svg><use href="#open"/></svg></button><button><svg><use href="#save"/></svg></button><button><svg><use href="#print"/></svg></button><button><svg><use href="#dbd"/></svg></button><button><svg><use href="#dbu"/></svg></button></div>
    <div class="tg"><button><svg><use href="#move"/></svg></button><button><svg><use href="#rot"/></svg></button><button><svg><use href="#zoom"/></svg></button><button><svg><use href="#zbox"/></svg></button><button><svg><use href="#fit"/></svg></button><button><svg><use href="#ud"/></svg></button></div>
    <div class="tg"><button><svg><use href="#lad"/></svg></button><button><svg><use href="#lad2"/></svg></button></div>
    <div class="tg nb"><button class="hot"><svg><use href="#cur"/></svg></button><label class="cb w72"><select aria-label="选择类型"><option>全部</option></select></label><button><svg><use href="#sqs"/></svg></button><i class="vs"></i><button><svg><use href="#cubes"/></svg></button><button><svg><use href="#rect"/></svg></button><button><svg><use href="#dots"/></svg></button><button class="hot"><svg><use href="#obox"/></svg></button></div>
    <div class="tg"><button class="fmt"><svg><use href="#wire"/></svg><span>格式%s</span></button><button><svg><use href="#hid"/></svg></button><button><svg><use href="#sol"/></svg></button></div>
    <div class="tg"><button><svg><use href="#mesh"/></svg></button><button><svg><use href="#pmesh"/></svg></button><button><svg><use href="#gcube"/></svg></button></div>
    <div class="tg"><button><svg><use href="#info"/></svg></button></div>
  </div>
  <div class="bar second">
    <div class="tg"><button><svg><use href="#v1"/></svg></button><button><svg><use href="#v2"/></svg></button><button><svg><use href="#v3"/></svg></button><button><svg><use href="#bent"/></svg></button><button><svg><use href="#undo"/></svg></button><button><svg><use href="#redo"/></svg></button><button><svg><use href="#blk"/></svg></button><button><svg><use href="#tbl"/></svg></button></div>
    <div class="tg"><button><svg><use href="#pal"/></svg></button><label class="cb w137"><select aria-label="颜色"><option>属性默认值</option></select></label><button><svg><use href="#tan"/></svg></button><span class="ca blk"></span></div>
    <div class="tg nb"><button><svg><use href="#lred"/></svg></button><button><svg><use href="#tbl"/></svg></button></div>
  </div>
  <div class="a-body">
    <aside class="treep">
      <div class="tt"><button class="on">模型</button><button>结果</button><button>Material Library</button></div>
      <div class="tb"><label class="cb w46"><svg viewBox="0 0 18 18"><path d="M2 5q7-4 14 0v10q-7 4-14 0z" fill="#e8b020" stroke="#222"/><path d="M2 8q7 3 14 0M2 11q7 3 14 0M2 5q7 3 14 0" fill="none" stroke="#222" stroke-width="1.500"/></svg><select aria-label="数据库"><option>模</option></select></label>
        <svg class="sp" viewBox="0 0 10 18"><path d="M5 1l4 5H1zM5 17l4-5H1z" fill="#999"/></svg><svg viewBox="0 0 16 16"><path d="M1 4h5l1 2h8v9H1zM10 12H6V8M4 10l2-2 2 2" fill="none" stroke="#999"/></svg><svg viewBox="0 0 16 16"><path d="M2 2h4v4H2zM6 7h4v4H6zM11 11h4v4h-4zM1 8l3 4" fill="none" stroke="#999"/></svg><svg viewBox="0 0 16 16"><circle cx="8" cy="7" r="4" fill="#ffe640" stroke="#222"/><path d="M6 12h4v3H6z" fill="#888"/><path d="M8 0v2M0 7h2M14 7h2M2 2l2 2M14 2l-2 2" stroke="#222"/></svg></div>
      <div class="tree">
        <div class="tv">
          <ul>
            <li class="l0"><b class="x">−</b><svg><use href="#asm"/></svg>模型 (1)</li>
            <li class="l1"><b class="x">−</b><span class="ul">Model-1</span></li>
            <li class="l2"><b class="x">−</b><svg><use href="#lpt"/></svg>部件 (2)</li>
            <li class="l3"><b class="x">+</b><span>Part-1</span></li>
            <li class="l3"><b class="x">−</b><span class="ul">Part-2</span></li>
            <li class="l4"><b class="x">−</b><svg><use href="#feat"/></svg>特征 (3)</li>
            <li class="l5"><b class="x">+</b><span class="cursel">Solid extrude-1</span></li>
            <li class="l5"><b class="x">+</b><span>Solid extrude-2</span></li>
            <li class="l5"><b class="x">+</b><span>Solid extrude-3</span></li>
            <li class="l4"><b></b><svg><use href="#set"/></svg>集</li>
            <li class="l4"><b></b><svg><use href="#srf"/></svg>表面</li>
            <li class="l4"><b></b><svg><use href="#skin"/></svg>蒙皮</li>
            <li class="l4"><b></b><svg><use href="#str"/></svg>纵梁</li>
            <li class="l4"><b></b><svg><use href="#ibeam"/></svg>截面指派</li>
            <li class="l4"><b></b><svg><use href="#ell"/></svg>方向</li>
            <li class="l4"><b></b><svg><use href="#stack2"/></svg>复合层</li>
            <li class="l4"><b class="x">+</b><svg><use href="#eng"/></svg>工程特征</li>
            <li class="l4"><b></b><svg><use href="#msh"/></svg>网格</li>
            <li class="l2"><b></b><svg><use href="#mat"/></svg>材料</li>
            <li class="l2"><b></b><svg><use href="#cal"/></svg>校验</li>
            <li class="l2"><b></b><svg><use href="#ibeam"/></svg>截面</li>
            <li class="l2"><b></b><svg><use href="#cross"/></svg>剖面</li>
            <li class="l2"><b class="x">+</b><svg><use href="#asm"/></svg>装配</li>
            <li class="l2"><b class="x">+</b><svg><use href="#step"/></svg>Steps (1)</li>
            <li class="l2"><b></b><svg><use href="#out"/></svg>场输出请求</li>
            <li class="l2"><b></b><svg><use href="#out2"/></svg>历程输出请求</li>
            <li class="l2"><b></b><svg><use href="#time"/></svg>时间点</li>
            <li class="l2"><b></b><svg><use href="#ale"/></svg>ALE自适应网格</li>
            <li class="l2"><b></b><svg><use href="#int"/></svg>相互作用</li>
            <li class="l2"><b></b><svg><use href="#intp"/></svg>相互作用属性</li>
            <li class="l2"><b></b><svg><use href="#con"/></svg>接触控制</li>
            <li class="l2"><b></b><svg><use href="#coni"/></svg>接触初始化</li>
            <li class="l2"><b></b><svg><use href="#cons"/></svg>Contact Stab</li>
            <li class="l2"><b></b><svg><use href="#cst"/></svg>约束</li>
            <li class="l2"><b></b><svg><use href="#cns"/></svg>连接截面</li>
            <li class="l2"><b class="x">+</b><span class="fi">ℱ</span>场</li>
            <li class="l2"><b></b><svg><use href="#amp"/></svg>幅值</li>
          </ul>
          <div class="vsb"><svg viewBox="0 0 15 16"><path d="M4 10l4-4 4 4" fill="none" stroke="#444" stroke-width="2"/></svg><i></i><svg viewBox="0 0 15 16"><path d="M4 6l4 4 4-4" fill="none" stroke="#444" stroke-width="2"/></svg></div>
        </div>
        <div class="hsb"><svg viewBox="0 0 16 16"><path d="M10 4L6 8l4 4" fill="none" stroke="#444" stroke-width="2"/></svg><i></i><svg viewBox="0 0 16 16"><path d="M6 4l4 4-4 4" fill="none" stroke="#444" stroke-width="2"/></svg></div>
      </div>
    </aside>
    <div class="work">
      <div class="modbar">
        <label>模块: <span class="cb w98"><svg class="sp" viewBox="0 0 8 18"><path d="M4 2l3 4H1zM4 16l3-4H1z"/></svg><select><option>属性</option></select></span></label>
        <label>模型: <span class="cb w98"><svg class="sp" viewBox="0 0 8 18"><path d="M4 2l3 4H1zM4 16l3-4H1z" fill="#888"/></svg><select><option>Model-1</option></select></span></label>
        <label>部件: <span class="cb w98"><svg class="sp" viewBox="0 0 8 18"><path d="M4 2l3 4H1zM4 16l3-4H1z"/></svg><select><option>Part-2</option></select></span></label>
      </div>
      <div class="canvas">
        <div class="tools">
          <div class="ts"><button><svg><use href="#se"/></svg></button><button><svg><use href="#tbl"/></svg></button></div>
          <div class="ts"><button><svg><use href="#ibeam"/></svg></button><button><svg><use href="#tbl"/></svg></button><button><svg><use href="#il"/></svg></button><button><svg><use href="#tbl"/></svg></button><button><svg><use href="#stack"/></svg></button><button><svg><use href="#tbl"/></svg></button><button><svg><use href="#ell"/></svg></button><button><svg><use href="#nt"/></svg></button></div>
          <div class="ts"><button><svg><use href="#cross"/></svg></button><button><svg><use href="#tbl"/></svg></button></div>
          <div class="ts"><button><svg><use href="#cube3"/></svg></button><button><svg><use href="#tbl"/></svg></button></div>
          <div class="ts"><button><svg><use href="#plate"/></svg></button><button><svg><use href="#tbl"/></svg></button></div>
          <div class="ts sep"><button><svg><use href="#ext"/></svg></button><button><svg><use href="#ext2"/></svg></button><button><svg><use href="#ers"/></svg></button></div>
          <div class="ts sep"><button><svg><use href="#plus"/></svg></button><button><svg><use href="#axis"/></svg></button><button><svg><use href="#grid"/></svg></button></div>
          <div class="ts sep"><button><svg><use href="#pick"/></svg></button><button><svg><use href="#part"/></svg></button><button><svg><use href="#part2"/></svg></button><button><svg><use href="#cut"/></svg></button></div>
          <div class="ts sep"><button><svg><use href="#xyz"/></svg></button><button><svg><use href="#tri"/></svg></button><button><svg><use href="#trip"/></svg></button><button><svg><use href="#pts"/></svg></button></div>
        </div>
        <div class="view">
          <svg class="scene" viewBox="1178 146 738 794" preserveAspectRatio="xMaxYMin meet">
            <defs><linearGradient id="shank" x1="0" y1="0" x2="0" y2="1"><stop offset="0" stop-color="#bbb"/><stop offset=".2" stop-color="#fff"/><stop offset=".75" stop-color="#eee"/><stop offset="1" stop-color="#777"/></linearGradient></defs>
            <path d="M1590 475h22v150h-22z" fill="url(#shank)"/>
            <path d="M1670 396l91-3 20 60-59 281-79-18q-22-10-32-54-12-70-3-150 12-90 62-116z" fill="url(#steel)" stroke="#111"/>
            <path d="M1761 394c17 0 24 40 24 81 0 85-22 200-46 240-8 15-14 20-21 19-17-6-21-56-20-106 4-100 28-205 50-230q7-6 13-4z" fill="#959595" stroke="#111"/>
            <path d="M1784 246l38 4 16 17q-10 4-30-1-24-8-25-18z" fill="#14737e" stroke="#cfe0ff" stroke-width="2"/>
            <path d="M1769 283l35 5 14 15q-5 24-19 23-30-4-31-28z" fill="#000066" stroke="#dcd0ff" stroke-width="2"/>
            <path d="M1810 262l-20 71" stroke="#dcd0ff" stroke-width="2"/><path d="M1807 252h10v10h-10z" fill="#e00"/><circle cx="1790" cy="333" r="5" fill="#dcd0ff"/>
            <g class="ax"><text x="1756" y="286">Z</text><text x="1819" y="310">X</text><text x="1783" y="349">Y</text></g>
            <path d="M1199 863l14-8v5h20v8h-20v5z" fill="#0a0ac0"/>
            <g class="axw"><text x="1178" y="866">Z</text><text x="1214" y="929">Y</text></g>
          </svg>
          <form class="dlg" onsubmit="return false">
            <div class="dt"><svg><use href="#abq"/></svg><h2>编辑材料</h2><button type="button" aria-label="关闭"><svg viewBox="0 0 12 12"><path d="M1 1l10 10M11 1L1 11" stroke="#888"/></svg></button></div>
            <div class="db">
              <div class="row nm"><label for="mname">名称:</label><input id="mname" type="text" value="Q235"></div>
              <div class="row ds"><label for="mdesc">描述:</label><textarea id="mdesc">SYC-09</textarea><button type="button" class="plain" aria-label="编辑"><svg><use href="#pencil"/></svg></button></div>
              <fieldset><legend>材料行为</legend>
                <ul class="list"><li>密度</li><li>弹性</li><li class="on">塑性</li></ul>
                <div class="mrow"><div class="mm"><button type="button">通用(<u>G</u>)</button><button type="button">力学(<u>M</u>)</button><button type="button">热学(<u>T</u>)</button><button type="button"><u>电/磁&nbsp;</u></button><button type="button">其它(<u>O</u>)</button></div><button type="button" class="erb" aria-label="删除"><svg><use href="#eraser"/></svg></button></div>
              </fieldset>
              <fieldset class="pl"><legend>塑性</legend>
                <div class="row"><label class="ck"><input type="checkbox">Use scale stress value:</label><input type="text" class="blue" aria-label="scale stress" disabled><button type="button" class="btn sub"><span class="ca blk"></span>子选项</button></div>
                <div class="row g4"><label>硬化: <span class="cb w146"><select><option>各向同性</option></select></span></label></div>
                <div class="row g4"><label>Extrapolation: <span class="cb w48"><select><option>常数</option></select></span></label></div>
                <div class="row g3"><label class="ck"><input type="checkbox">使用与应变率相关的数据</label></div>
                <div class="row"><label class="ck"><input type="checkbox">使用与温度相关的数据</label></div>
                <div class="row"><label>场变量个数: <span class="spin"><input type="number" value="0"><svg viewBox="0 0 12 20"><path d="M0 0h12v9H0zM0 11h12v9H0z" fill="#eee" stroke="#aaa"/><path d="M6 3l3 3H3z"/><path d="M6 17l3-3H3z" fill="#888"/></svg></span></label></div>
                <fieldset class="dat"><legend>数据</legend>
                  <div class="dbox">
                    <div class="dwrap">
                      <table class="dhead"><tr><th></th><th>屈服应力</th><th>塑性应变</th></tr></table>
                      <div class="drows"><table><tr><th>2</th><td>400</td><td>0.01</td></tr><tr><th>3</th><td>450</td><td>0.05</td></tr><tr><th>4</th><td>480</td><td>0.1</td></tr><tr><th>5</th><td>500</td><td>0.2</td></tr><tr><th>6</th><td>550</td><td>0.4</td></tr><tr><th>7</th><td>600</td><td>0.6</td></tr><tr><th>8</th><td>650</td><td class="on">0.8</td></tr></table></div>
                    </div>
                    <div class="vsb d"><svg viewBox="0 0 15 16"><path d="M4 10l4-4 4 4" fill="none" stroke="#444" stroke-width="2"/></svg><i></i><svg viewBox="0 0 15 16"><path d="M4 6l4 4 4-4" fill="none" stroke="#444" stroke-width="2"/></svg></div>
                  </div>
                </fieldset>
              </fieldset>
              <div class="acts"><button type="button" class="btn">确定</button><button type="button" class="btn">取消</button></div>
            </div>
          </form>
        </div>
      </div>
      <div class="brand"><svg class="ds3" viewBox="0 0 20 20"><path d="M8 2q6-2 6 1t-6 4q5 0 2 5-3 5-8 7 0-4 5-8M19 9q-6-2-5 2 4 4 1 6-2 1-5 0" fill="none" stroke="#14235c" stroke-width="2"/></svg><b>SIMULIA</b></div>
    </div>
  </div>
  <div class="msg">
    <div class="mi"><button aria-label="消息"><svg viewBox="0 0 22 22"><path d="M3 1h18v19H3z" fill="#e4e6d8" stroke="#444"/><path d="M1 20l7-8 4 3-8 7z" fill="#e8dc70" stroke="#333"/></svg></button><button aria-label="命令行" class="cl"><svg viewBox="0 0 24 18"><path d="M1 1h22v17H1z" fill="#f4e254" stroke="#222" stroke-width="2"/><path d="M5 7l3 4-3 4M11 7l3 4-3 4M17 7l3 4-3 4" fill="none" stroke="#222" stroke-width="2"/></svg></button></div>
    <textarea aria-label="消息区" readonly></textarea>
  </div>
</section>
<div class="wm" aria-hidden="true">莫西网<span>www.3dmox.com</span></div>
</main>

<footer class="task">
  <button aria-label="开始"><svg viewBox="0 0 24 24"><path d="M4 7l7-1v6H4zM12 6l8-1v7h-8zM4 13h7v6l-7-1zM12 13h8v7l-8-1z" fill="#fff"/></svg></button>
  <button aria-label="Edge"><svg viewBox="0 0 24 24"><circle cx="12" cy="12" r="12" fill="url(#edge)"/><path d="M8 13q1-6 8-5 6 2 2 7h6q-4 8-11 6-6-3-5-8z" fill="#0c59a4"/><path d="M12 14q0-4 4-3 3 2 1 4h6q-2 2-6 2-4 0-5-3z" fill="#101010"/></svg></button>
  <button aria-label="应用"><svg viewBox="0 0 24 24"><circle cx="7" cy="7" r="6" fill="#ffb84a"/><circle cx="17" cy="7" r="6" fill="#f58a1e"/><circle cx="7" cy="17" r="6" fill="#f58a1e"/><circle cx="17" cy="17" r="6" fill="#f0701a"/><path d="M5 7h14v10H5z" fill="#f7912a"/><circle cx="12" cy="12" r="5" fill="#f7a030" stroke="#fff" stroke-width="2"/></svg></button>
  <button aria-label="Word"><svg viewBox="0 0 24 24"><path d="M12 4h11v16H12z" fill="#fff"/><path d="M14 7h8M14 10h8M14 13h8M14 16h8" stroke="#2b579a"/><path d="M1 4l13-3v22L1 20z" fill="#2b579a"/><path d="M4 9l2 7 2-6 2 6 2-7" fill="none" stroke="#fff" stroke-width="2"/></svg></button>
  <button aria-label="文件资源管理器"><svg viewBox="0 0 24 24"><path d="M1 4h8l2 2h12v15H1z" fill="#e8b33c"/><path d="M1 8h22v13H1z" fill="#ffd76e"/><path d="M5 21v-6h14v6h-4v-3H9v3z" fill="#3a9bdc"/></svg></button>
  <button aria-label="命令提示符"><svg viewBox="0 0 24 24"><path d="M1 3h22v18H1z" fill="#000" stroke="#999"/><path d="M1 3h22v3H1z" fill="#ddd"/><path d="M4 9h3M4 9v3h3M9 9v1M11 9l2 3M14 12h5" stroke="#fff" fill="none"/></svg></button>
  <button aria-label="Abaqus"><svg viewBox="0 0 24 24"><use href="#abq"/></svg></button>
  <button aria-label="QQ" class="on"><svg viewBox="0 0 24 24"><rect width="24" height="24" rx="4" fill="#fff"/><ellipse cx="12" cy="14" rx="8" ry="7" fill="#111"/><ellipse cx="12" cy="8" rx="5" ry="6" fill="#111"/><ellipse cx="12" cy="16" rx="5" ry="5" fill="#fff"/><circle cx="10" cy="6" r="1" fill="#fff"/><circle cx="14" cy="6" r="1" fill="#fff"/><path d="M6 11q6 3 12 0v2q-6 3-10 1v4H6z" fill="#e02020"/><ellipse cx="12" cy="9" rx="3" ry="1" fill="#f5a623"/><path d="M6 21h5M13 21h5" stroke="#f5a623" stroke-width="2"/></svg></button>
  <span class="grow"></span>
  <svg class="tr" viewBox="0 0 16 16"><path d="M3 11l5-5 5 5" fill="none" stroke="#fff" stroke-width="1.5"/></svg>
  <svg class="tr" viewBox="0 0 16 16"><path d="M5 3h10v8H5M8 14h5M10 11v3M0 2h4v4H0zM2 6v8h3" fill="none" stroke="#fff"/></svg>
  <svg class="tr" viewBox="0 0 16 16"><path d="M1 6h2l4-4v12L3 10H1zM9 6q2 2 0 4M11 4q4 4 0 8M13 2q5 6 0 12" fill="none" stroke="#fff"/></svg>
  <span class="ime">中</span>
  <time>8:27<br>2025/5/23</time>
  <button class="nt2" aria-label="通知"><svg viewBox="0 0 18 18"><path d="M1 2h16v12h-5l-3 3-3-3H1z" fill="none" stroke="#fff" stroke-width="1.5"/></svg></button>
</footer>
</body>
</html>
```
FILE: styles.css
```css
* { box-sizing: border-box; }
body {
  margin: 0; height: 100vh; overflow: hidden;
  display: grid; grid-template-rows: minmax(0, 1fr) 36px;
  font: 12px/16px "Open Sans", "Noto Sans CJK SC", sans-serif; color: #111;
}
button, input, select, textarea { font: inherit; color: inherit; margin: 0; padding: 0; border: 0; background: none; border-radius: 0; }
button { display: inline-flex; align-items: center; justify-content: center; white-space: nowrap; }
svg { display: block; flex: none; }
h1, h2, p, ul { margin: 0; padding: 0; font-weight: normal; font-size: 12px; list-style: none; }
select { appearance: none; min-width: 0; outline: 0; }
.defs { position: absolute; width: 0; height: 0; }
.grow { flex: 1; }
.ca { flex: none; width: 7px; height: 4px; margin: 0 4px; background: #666; clip-path: polygon(0 0, 100% 0, 50% 100%); }
.ca.blk { background: #000; width: 10px; height: 6px; }
.vs { flex: none; width: 1px; height: 20px; background: #cfcfcf; margin: 0 4px; }

.stage { position: relative; display: grid; grid-template-columns: minmax(0, 961fr) minmax(0, 955fr); min-height: 0; }

/* Word */
.word { display: flex; flex-direction: column; min-height: 0; background: #f1f1f1; border-left: 1px solid #8a8a8a; border-right: 1px solid #44607a; }
.w-title { height: 34px; background: #2b579a; display: grid; grid-template-columns: 1fr auto 1fr; align-items: center; color: #b4c5e0; border-top: 1px solid #44688f; padding-bottom: 1px; }
.w-title h1 { font-size: 12px; margin-right: 8px; }
.quick { display: flex; padding-left: 19px; }
.quick svg { width: 16px; height: 16px; }
.quick .dim { margin-left: 28px; }
.quick .dim svg { width: 14px; height: 14px; }
.quick .dim + .dim { margin-left: 16px; }
.quick .dim .ca { background: #6486be; width: 6px; margin: 0 0 0 9px; }
.quick .custom { margin-left: 36px; }
.quick .custom svg { width: 8px; height: 8px; }
.w-ctl { display: flex; justify-content: flex-end; gap: 32px; padding-right: 17px; }
.w-ctl svg { width: 14px; height: 14px; }
.w-tabs { height: 26px; background: #2b579a; color: #fff; display: flex; }
.w-tabs button { width: 53px; }
.w-tabs .file { width: 63px; padding-right: 4px; }
.w-tabs .on { background: #f1f1f1; color: #2b579a; width: 51px; }
.tell { display: flex; align-items: center; gap: 4px; color: #a9bddd; margin-left: 14px; flex: 1; }
.tell svg { width: 13px; height: 14px; }
.w-tabs .login { width: 44px; }
.w-tabs .share { width: 70px; background: #17417e; gap: 4px; padding-right: 5px; }
.share svg { width: 15px; height: 16px; }
.ribbon { height: 95px; display: flex; border-bottom: 1px solid #d0d0d0; color: #444; padding-top: 4px; }
.grp { display: flex; flex-direction: column; border-right: 1px solid #d4d4d4; }
.gbody { flex: 1; }
.glabel { height: 18px; text-align: center; position: relative; color: #666; }
.glabel svg { position: absolute; right: 4px; bottom: 3px; width: 8px; height: 8px; }
.g-clip { width: 73px; } .g-font { width: 308px; } .g-para { width: 181px; } .g-style { width: 246px; } .g-edit { width: 44px; }
.g-clip .glabel, .g-font .glabel, .g-para .glabel, .g-style .glabel { padding-right: 16px; }
.clip { display: flex; padding-left: 11px; gap: 8px; }
.paste { flex-direction: column; justify-content: flex-start; width: 30px; padding-top: 2px; gap: 2px; }
.paste svg { width: 30px; height: 32px; }
.paste .ca, .edit .ca { margin-top: 3px; }
.col3 { display: flex; flex-direction: column; gap: 8px; padding-top: 2px; }
.col3 svg { width: 15px; height: 15px; }
.r { display: flex; align-items: center; }
.r1 { padding: 7px 0 0 4px; height: 30px; }
.r2 { padding-left: 3px; height: 36px; }
.r2 { margin-top: 1px; }
.r2 .ca { margin: 0 3px; }
.p1 { height: 24px; padding-left: 3px; }
.p1 .ca { margin: 0 3px; }
.p1 .vs { margin: 0 3px; }
.p1 svg { width: 14px; height: 14px; }
.b22 { width: 22px; height: 22px; font-size: 13px; }
.b22.sel { background: #c6c6c6; }
.b34 { width: 34px; font-size: 13px; }
.b34 .ca { margin: 0 0 0 4px; }
.b22 svg { width: 15px; height: 15px; }
.b22 sup, .b22 sub { font-size: 8px; color: #2e75b6; }
.low sub { align-self: flex-end; line-height: 10px; }
.high sup { align-self: flex-start; line-height: 10px; }
.big { font-size: 16px; } .mid { font-size: 14px; }
.big sup, .mid sup { align-self: flex-start; line-height: 10px; }
.it { font-family: "Liberation Serif", serif; font-weight: bold; font-size: 15px; }
.b22 s { font-size: 11px; }
.wen { flex-direction: column; font-size: 9px; line-height: 10px; }
.wen b { color: #2e75b6; }
.abox { border: 1px solid #41719c; width: 16px; line-height: 15px; font-weight: bold; }
.fx { color: #fff; font-size: 16px; font-weight: bold; -webkit-text-stroke: 1px #41719c; }
.hl { border-bottom: 4px solid #ff0; font-size: 11px; height: 18px; width: 18px; margin: 0 2px; }
.fc { border-bottom: 4px solid #d00; height: 18px; width: 16px; margin: 0 2px; font-weight: bold; }
.shade { background: #aaa; width: 14px; line-height: 14px; }
.circ { border: 1px solid #555; border-radius: 50%; width: 16px; line-height: 14px; font-size: 9px; }
.wc { height: 23px; border: 1px solid #c6c6c6; background: #fff; display: flex; align-items: center; position: relative; }
.wc select { width: 100%; padding-left: 2px; height: 21px; }
.wc::after { content: ""; position: absolute; right: 5px; top: 9px; width: 6px; height: 4px; background: #666; clip-path: polygon(0 0, 100% 0, 50% 100%); }
.f1 { width: 91px; } .f2 { width: 47px; border-left: 0; }
.gallery { display: flex; height: 60px; margin: 2px 0 0 5px; width: 233px; border: 1px solid #c0c0c0; background: #fff; }
.gallery button { width: 73px; flex-direction: column; overflow: hidden; }
.gallery .on { border: 4px solid #c0c0c0; padding: 0 2px; }
.gallery .s { font-size: 13px; height: 28px; line-height: 28px; width: 58px; overflow: hidden; color: #222; text-align: left; }
.gallery .h { font-size: 25px; font-weight: 600; color: #000; }
.gallery em { font-style: normal; line-height: 18px; }
.gs { flex: 1; display: grid; border-left: 1px solid #c0c0c0; }
.gs span { border-bottom: 1px solid #c0c0c0; display: flex; align-items: center; justify-content: center; }
.gs .ca { width: 6px; margin: 0; }
.edit { flex-direction: column; gap: 3px; }
.ebox { width: 30px; height: 30px; background: #fff; border: 1px solid #d0d0d0; display: grid; place-items: center; }
.ebox svg { width: 14px; height: 14px; }
.fold { margin-left: auto; align-self: flex-end; padding: 0 10px 3px; }
.fold svg { width: 10px; height: 10px; }
.w-body { flex: 1; display: flex; min-height: 0; background: #e6e6e6; }
.navp { width: 270px; border-right: 1px solid #bcbcbc; padding: 14px 12px 0 14px; color: #444; flex: none; }
.navp p { margin-top: 16px; width: 244px; line-height: 15px; white-space: normal; }
.nt + p { margin-top: 33px; }
.nh { display: flex; align-items: center; height: 26px; }
.nh h2 { font-size: 20px; line-height: 26px; color: #2b579a; flex: 1; }
.nh .ca { width: 9px; height: 5px; margin: 0 9px 6px; }
.nh button { padding-bottom: 6px; }
.nh svg { width: 10px; height: 10px; }
.search { display: flex; align-items: center; background: #fff; border: 1px solid #ababab; height: 24px; width: 237px; margin-top: 7px; padding: 0 0 0 3px; }
.search input { flex: 1; min-width: 0; }
.search input::placeholder { color: #666; opacity: 1; }
.search svg { width: 14px; height: 14px; margin-right: 2px; }
.search .ca { width: 6px; }
.nt { display: flex; gap: 25px; margin-top: 18px; }
.nt .on { color: #2b579a; font-weight: bold; }
.doc { flex: 1; min-width: 0; padding-right: 18px; }
.page { background: #fff; padding: 0 0 0 32px; font: 16px/31px "Liberation Serif", "Noto Sans CJK SC", serif; color: #000; }
.page p { font-size: 16px; white-space: nowrap; }
.page p.tight { line-height: 21px; }
.pg1 { height: 178px; padding-top: 6px; margin-bottom: 16px; }
.pg2 { height: 651px; padding-top: 71px; }
.mk { font: normal 10px/12px "DejaVu Sans", sans-serif; color: #777; }
.crop { display: flex; justify-content: space-between; height: 24px; margin: 0 61px 0 -24px; }
.crop i { width: 24px; border: 0 solid #aaa; }
.bot { margin-top: 21px; }
.bot i { border-top-width: 1px; border-right-width: 1px; }
.bot i + i { border-right-width: 0; border-left-width: 1px; }
.top i { border-bottom-width: 1px; border-right-width: 1px; }
.top i + i { border-right-width: 0; border-left-width: 1px; }
.page table { border-collapse: collapse; table-layout: fixed; width: 565px; }
.page .t7 { width: 466px; }
.page td { border: 1px solid #000; padding: 0 0 0 7px; height: 32px; line-height: 31px; vertical-align: top; white-space: nowrap; }
.page .t3 tr:last-child td { height: 31px; line-height: 30px; }
.page .end { border: 0; padding: 0 0 0 2px; width: 12px; line-height: 22px; }
.t3 td:first-child, .t3 td:nth-child(2), .t3 td:nth-child(3) { width: 184px; }
.page sup { font-size: 10px; line-height: 0; }
.just { display: block; text-align-last: justify; padding-right: 6px; }
.c84 { width: 84px; } .c63 { width: 63px; } .c65 { width: 65px; } .c59 { width: 59px; } .c60 { width: 60px; } .c49 { width: 49px; } .c50 { width: 50px; }
.red { color: #c00000; }
.wavy { text-decoration: underline wavy #e00 1px; text-underline-offset: 3px; }
.wavy.bl { text-decoration-color: #22c; }
.w-stat { height: 23px; border-top: 1px solid #c6c6c6; display: flex; align-items: center; color: #444; padding: 0 20px 2px 7px; gap: 18px; }
.w-stat > svg { width: 15px; height: 13px; }
.views { display: flex; }
.vw { width: 38px; height: 22px; }
.vw.on { background: #cbcbcb; }
.vw svg { width: 13px; height: 13px; }
.zoomer { display: flex; align-items: center; gap: 4px; font-size: 15px; margin-left: -14px; }
.zoomer input { appearance: none; width: 100px; height: 12px; background: linear-gradient(#999, #999) center / 100% 1px no-repeat; }
.zoomer input::-webkit-slider-thumb { appearance: none; width: 4px; height: 11px; background: #555; }

/* Abaqus */
.abq { display: flex; flex-direction: column; min-height: 0; min-width: 0; background: #f5f5f5; border-top: 1px solid #3d4d6d; overflow: hidden; }
.a-title { height: 30px; background: #fff; display: flex; align-items: center; padding: 0 14px 0 8px; gap: 34px; color: #8a8a8a; }
.a-title h1 { flex: 1; margin-left: -28px; font-size: 12px; }
.a-title > svg { width: 16px; height: 16px; }
.a-title button svg { width: 11px; height: 11px; }
.a-menu { height: 26px; display: flex; align-items: center; padding: 2px 4px 0 5px; gap: 17px; background: linear-gradient(90deg, #fff, #efefef); }
.a-menu .doci { width: 14px; height: 14px; margin-right: -6px; }
.wh svg { width: 14px; height: 14px; }
.mdi { margin-left: auto; display: flex; gap: 9px; }
.mdi svg { width: 12px; height: 12px; background: #fff; }
.bar { height: 29px; display: flex; border-top: 1px solid #bdbdbd; border-bottom: 1px solid #bdbdbd; background: linear-gradient(90deg, #fff, #efefef); flex: none; }
.tg { display: flex; align-items: center; border-right: 1px solid #bdbdbd; padding-left: 8px; background: radial-gradient(circle, #999 1px, transparent 1px) 2px 50% / 4px 5px repeat-y; }
.tg.nb { border-right: 0; }
.tg button { width: 26px; height: 26px; flex: none; }
.tg svg { width: 21px; height: 21px; }
.tg .hot { background: #bcdcf4; }
.tg .vs { margin: 0; }
.tg .fmt { width: 47px; position: relative; }
.fmt span { position: absolute; left: 0; right: 0; }
.bar.second { border-top: 0; justify-content: flex-end; margin-top: -1px; }
.second .tg:last-child { margin-right: -6px; }
.cb { position: relative; display: inline-flex; align-items: center; height: 24px; border: 1px solid #999; background: #fff; padding-right: 12px; vertical-align: middle; flex: none; overflow: hidden; }
.cb select { flex: 1; width: 20px; padding-left: 3px; height: 22px; }
.cb::after { content: ""; position: absolute; right: 0; top: 0; bottom: 0; width: 11px; background: #e1e1e1; border-left: 1px solid #adadad; }
.cb::before { content: ""; position: absolute; z-index: 1; right: 3px; top: 7px; width: 5px; height: 5px; border: solid #555; border-width: 0 1px 1px 0; transform: rotate(45deg); }
.cb svg { width: 18px; height: 18px; }
.cb .sp { width: 8px; margin-left: 2px; }
.w72 { width: 72px; } .w137 { width: 137px; } .w46 { width: 46px; } .w98 { width: 98px; } .w146 { width: 146px; } .w48 { width: 48px; }
.a-body { flex: 1; display: flex; min-height: 0; background: #fafafa; }
.treep { width: 150px; padding: 6px 0 5px 2px; display: flex; flex-direction: column; flex: none; overflow: hidden; }
.tt { display: flex; height: 27px; overflow: hidden; flex: none; }
.tt button { border: 1px solid #d5d5d5; background: #f0f0f0; padding: 0 6px; flex: none; margin-top: 2px; }
.tt .on { background: #fff; border-bottom: 0; padding: 0 9px; margin-top: 0; }
.tt button:last-child { padding: 0 8px; }
.tb { display: flex; align-items: center; gap: 10px; height: 32px; padding-left: 3px; background: #fff; border-right: 1px solid #ccc; overflow: hidden; flex: none; }
.tb .cb { padding-left: 2px; }
.tb .cb select { padding: 0; }
.tb > svg { width: 16px; height: 16px; }
.tb > .sp { width: 9px; }
.tree { flex: 1; min-height: 0; border: 1px solid #999; margin-left: 3px; background: #fff; width: 145px; display: flex; flex-direction: column; }
.tv { flex: 1; display: flex; min-height: 0; overflow: hidden; }
.tv ul { width: 126px; overflow: hidden; flex: none; }
.tree li { height: 21px; display: flex; align-items: center; white-space: nowrap; gap: 3px; background-repeat: no-repeat; background-size: 1px 100%; padding-left: 2px;
  --d: repeating-linear-gradient(#aaa 0 1px, transparent 1px 3px); background-image: var(--d); background-position: 6px 0; }
.tree .l0 { background: none; }
.tree .l1 { padding-left: 20px; }
.tree .l2 { padding-left: 38px; background-image: var(--d), var(--d); background-position: 6px 0, 42px 0; }
.tree .l3 { padding-left: 56px; background-image: var(--d), var(--d), var(--d); background-position: 6px 0, 42px 0, 60px 0; }
.tree .l4 { padding-left: 74px; background-image: var(--d), var(--d), var(--d); background-position: 6px 0, 42px 0, 78px 0; }
.tree .l5 { padding-left: 92px; background-image: var(--d), var(--d), var(--d); background-position: 6px 0, 42px 0, 78px 0; }
.tree li b { width: 9px; height: 9px; flex: none; }
.tree li .x { border: 1px solid #8a8a8a; background: #fff; font: 9px/7px "DejaVu Sans"; text-align: center; color: #334; }
.tree li svg { width: 16px; height: 16px; margin: 0 1px; }
.fi { width: 16px; margin: 0 1px; font: bold 17px/20px "DejaVu Serif", "DejaVu Sans"; }
.tree li span:not(.fi) { padding: 0 2px; }
.ul { border-bottom: 2px solid #000; line-height: 15px; }
.cursel { background: #0078d7; color: #fff; line-height: 21px; }
.vsb { width: 16px; background: #f0f0f0; display: flex; flex-direction: column; }
.vsb svg { width: 15px; height: 16px; }
.vsb i { background: #c9c9c9; }
.vsb svg:last-child { margin-top: auto; }
.tree .vsb i { flex: 0 0 72%; }
.hsb { height: 17px; background: #f0f0f0; display: flex; align-items: center; width: 126px; }
.hsb svg { width: 16px; height: 16px; }
.hsb i { width: 52px; height: 15px; background: #cdcdcd; }
.hsb svg:last-child { margin-left: auto; }
.work { flex: 1; min-width: 0; display: flex; flex-direction: column; }
.modbar { height: 32px; display: flex; align-items: center; gap: 13px; padding-left: 12px; background: linear-gradient(#fafafa, #eee); flex: none; }
.modbar .cb { margin-left: 2px; }
.canvas { flex: 1; min-height: 0; display: flex; }
.tools { width: 67px; padding: 4px 2px 0 7px; background: linear-gradient(90deg, #fcfcfc, #f0f0f0); flex: none; display: flex; flex-direction: column; gap: 5px; }
.ts { display: grid; grid-template-columns: 28px 28px; grid-auto-rows: 28px; }
.ts svg { width: 22px; height: 22px; }
.ts.sep { border-top: 1px solid #aaa; padding-top: 6px; margin-top: -3px; margin-bottom: -2px; }
.view { flex: 1; min-width: 0; position: relative; border-top: 1px solid #444; background: linear-gradient(#1b2d48, #24354f 30%, #3a4e72 58%, #5d7094 76%, #97a4bf 94%, #a0b2c8); overflow: hidden; }
.scene { width: 100%; height: auto; }
.ax { fill: #d8e84a; font: 11px "Open Sans", sans-serif; }
.axw { fill: #fff; font: bold 15px "DejaVu Sans", sans-serif; }
.dlg { position: absolute; left: 42px; top: 58px; width: 378px; background: linear-gradient(100deg, #fdfdfd, #ededed); box-shadow: 1px 2px 8px rgba(0,0,0,.6); }
.dt { height: 31px; background: #fff; display: flex; align-items: center; gap: 5px; padding: 0 10px 2px 8px; color: #8a8a8a; }
.dt h2 { flex: 1; }
.dt > svg { width: 16px; height: 16px; }
.dt button svg { width: 11px; height: 11px; }
.db { padding: 3px 4px 6px; }
.row { display: flex; align-items: center; height: 25px; }
.nm, .ds { padding-left: 2px; gap: 4px; }
.nm input { flex: 1; height: 25px; border: 1px solid #999; background: #fff; padding-left: 3px; }
.ds { height: 41px; margin: 4px 0 3px; align-items: flex-start; gap: 6px; }
.ds label { line-height: 22px; }
.ds textarea { width: 301px; height: 41px; border: 1px solid #999; background: #fff; padding: 3px 4px; resize: none; overflow: hidden; }
.ds .plain { align-self: center; margin-left: 4px; }
.ds svg { width: 20px; height: 20px; }
fieldset { margin: 0; border: 1px solid #d5d5d5; padding: 7px 5px 4px; min-width: 0; }
legend { padding: 4px 5px 0; margin-left: 1px; line-height: 16px; }
.list { height: 110px; border: 1px solid #999; background: #fff; padding: 1px; }
.list li { height: 21px; line-height: 21px; padding-left: 3px; }
.list .on { background: #0078d7; color: #fff; }
.mrow { display: flex; align-items: center; gap: 5px; margin-top: 5px; }
.mm { flex: 1; height: 26px; border: solid #aaa; border-width: 0 1px 1px 0; display: flex; gap: 17px; padding: 2px 0 0 10px; }
.erb, .btn { border: 1px solid #adadad; background: #e3e3e3; }
.erb { width: 22px; height: 22px; }
.erb svg { width: 14px; height: 14px; }
.pl { margin-top: 4px; padding: 11px 9px 9px 9px; }
.pl > legend { margin-left: -3px; }
.pl > .row { padding-left: 2px; }
.ck { display: flex; align-items: center; gap: 5px; }
.ck input { appearance: none; width: 13px; height: 13px; border: 1px solid #333; background: #fff; }
.blue { width: 78px; height: 25px; border: 1px solid #9ab4d2; background: #b3cdea; margin-left: 9px; }
.sub { margin-left: auto; height: 23px; width: 57px; }
.sub .ca { margin: 0 4px 0 0; }
.pl .cb { margin-left: 2px; }
.g4 { margin-top: 4px; } .g3 { margin-top: 3px; }
.spin { display: inline-flex; vertical-align: middle; width: 63px; height: 24px; border: 1px solid #999; background: #fff; align-items: center; padding-right: 2px; gap: 3px; margin-left: 1px; }
.spin input { width: 45px; text-align: right; appearance: textfield; }
.spin input::-webkit-inner-spin-button { appearance: none; }
.spin svg { width: 12px; height: 20px; }
.dat { margin-top: 3px; padding: 7px 5px 4px; }
.dbox { height: 157px; border: 1px solid #999; background: #fff; display: flex; }
.dwrap { flex: 1; display: flex; flex-direction: column; min-width: 0; }
.dbox table { border-collapse: collapse; table-layout: fixed; width: 216px; text-align: center; }
.dbox th:first-child { width: 16px; }
.dbox th, .dbox td { padding: 0; border: 0; box-shadow: inset -1px -1px #eee; }
.dhead th { height: 22px; }
.drows { flex: 1; overflow: hidden; display: flex; align-items: flex-end; min-height: 0; padding-bottom: 1px; }
.drows th, .drows td { height: 20px; line-height: 20px; }
.drows .on { background: #0078d7; color: #fff; }
.vsb.d { margin: 1px; }
.vsb.d i { flex: 0 0 99px; margin-top: 20px; }
.acts { display: flex; justify-content: space-between; padding: 10px 71px 0 70px; }
.acts .btn { width: 42px; height: 23px; }
.brand { height: 35px; display: flex; align-items: center; justify-content: flex-end; gap: 5px; color: #14235c; background: linear-gradient(#fff, #eee); overflow: hidden; flex: none; }
.brand b { font: italic bold 16px/20px "DejaVu Sans", sans-serif; }
.brand svg { width: 20px; height: 20px; }
.msg { height: 64px; display: flex; padding: 1px 15px 4px 2px; flex: none; background: #f2f2f2; }
.mi { width: 39px; display: flex; flex-direction: column; align-items: center; background: #fff; gap: 14px; padding-top: 9px; overflow: hidden; }
.mi svg { width: 20px; height: 21px; }
.mi .cl svg { width: 24px; height: 18px; }
.msg textarea { flex: 1; border: 1px solid #999; background: #fff; resize: none; }

.wm { position: absolute; left: 576px; top: 480px; white-space: nowrap; pointer-events: none; font: 100 80px/104px "Noto Sans CJK SC", sans-serif; color: rgba(255,255,255,.7); text-shadow: 1px 1px 1px rgba(70,70,70,.8); }
.wm span { font: 67px/104px "Liberation Mono", monospace; }

.task { background: #101010; color: #fff; display: flex; align-items: flex-start; overflow: hidden; }
.task button { width: 49px; height: 40px; flex: none; }
.task button svg { width: 24px; height: 24px; }
.task .on { background: #333; }
.tr { width: 16px; height: 16px; margin: 12px 4px 0; }
.ime { font-size: 15px; line-height: 40px; margin: 0 11px 0 6px; }
.task time { text-align: center; line-height: 19px; width: 58px; }
.task .nt2 { width: 58px; }
.task .nt2 svg { width: 17px; height: 17px; }
```
